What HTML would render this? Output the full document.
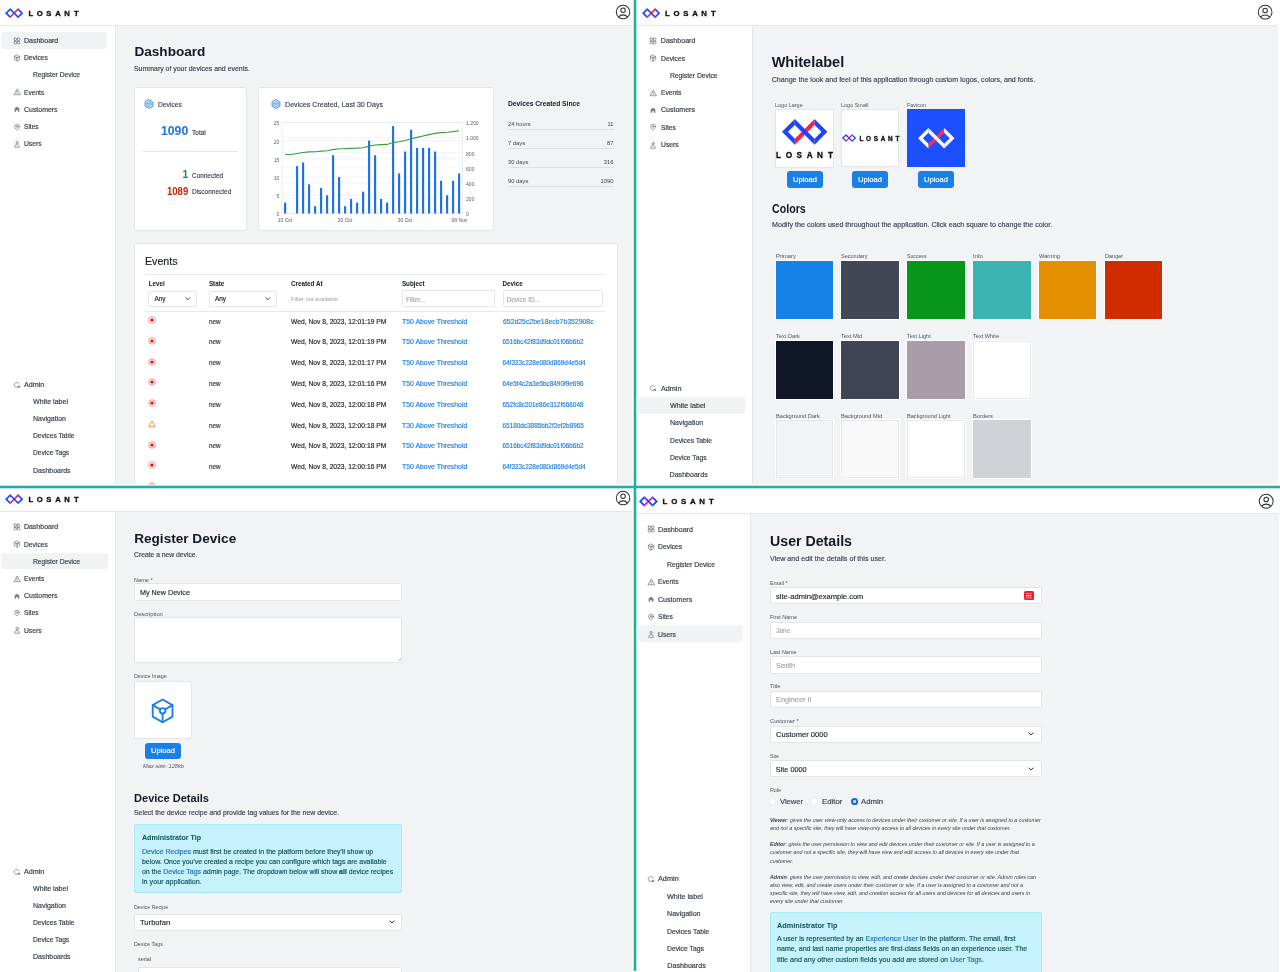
<!DOCTYPE html><html><head><meta charset="utf-8"><style>
html,body{margin:0;padding:0;width:1280px;height:972px;overflow:hidden;background:#fff;font-family:'Liberation Sans', sans-serif;}
.a{position:absolute;}
.t{white-space:nowrap;}
</style></head><body>
<div class="a" style="left:0.00px;top:0.00px;width:1280.00px;height:972.00px;background:#fff;"></div>
<div class="a" style="left:0;top:0;width:1280px;height:972px;clip-path:inset(0px 646px 487.8px 0px);will-change:transform">
<div class="a" style="left:0.00px;top:0.00px;width:632.00px;height:484.00px;background:#fff;"></div>
<div class="a" style="left:115.00px;top:25.00px;width:517.00px;height:459.00px;background:#f2f3f5;"></div>
<div class="a" style="left:0.00px;top:25.00px;width:632.00px;height:1.00px;background:#e4e6ea;"></div>
<div class="a" style="left:115.00px;top:25.00px;width:1.00px;height:459.00px;background:#e4e6ea;"></div>
<svg class="a" style="left:5.00px;top:8.10px;overflow:visible" width="18.30" height="10.30" viewBox="0 0 177 100"><polygon fill="#ff1f45" points="50,100 127,23 127,0 50,77"/><polygon fill="#1f43ff" points="50,0 0,50 50,100 50,77 23,50 50,23"/><polygon fill="#1f43ff" points="127,0 177,50 127,100 127,77 154,50 127,23"/><polygon fill="#1f43ff" points="50,0 127,77 127,100 50,23"/></svg>
<div class="a t" id="t0" style="top:4.05px;line-height:20.00px;font-size:7.700px;color:#0b0d12;font-weight:700;font-style:normal;font-family:'Liberation Sans', sans-serif;white-space:nowrap;left:30.75px;transform:translateX(-50%);-webkit-text-stroke:0.3px #0b0d12;">L</div>
<div class="a t" id="t1" style="top:4.05px;line-height:20.00px;font-size:7.700px;color:#0b0d12;font-weight:700;font-style:normal;font-family:'Liberation Sans', sans-serif;white-space:nowrap;left:39.85px;transform:translateX(-50%);-webkit-text-stroke:0.3px #0b0d12;">O</div>
<div class="a t" id="t2" style="top:4.05px;line-height:20.00px;font-size:7.700px;color:#0b0d12;font-weight:700;font-style:normal;font-family:'Liberation Sans', sans-serif;white-space:nowrap;left:48.95px;transform:translateX(-50%);-webkit-text-stroke:0.3px #0b0d12;">S</div>
<div class="a t" id="t3" style="top:4.05px;line-height:20.00px;font-size:7.700px;color:#0b0d12;font-weight:700;font-style:normal;font-family:'Liberation Sans', sans-serif;white-space:nowrap;left:58.05px;transform:translateX(-50%);-webkit-text-stroke:0.3px #0b0d12;">A</div>
<div class="a t" id="t4" style="top:4.05px;line-height:20.00px;font-size:7.700px;color:#0b0d12;font-weight:700;font-style:normal;font-family:'Liberation Sans', sans-serif;white-space:nowrap;left:67.15px;transform:translateX(-50%);-webkit-text-stroke:0.3px #0b0d12;">N</div>
<div class="a t" id="t5" style="top:4.05px;line-height:20.00px;font-size:7.700px;color:#0b0d12;font-weight:700;font-style:normal;font-family:'Liberation Sans', sans-serif;white-space:nowrap;left:76.25px;transform:translateX(-50%);-webkit-text-stroke:0.3px #0b0d12;">T</div>
<svg class="a" style="left:613.65px;top:3.25px;" width="18.10" height="18.10" viewBox="0 0 24 24"><path fill="none" stroke="#2b303b" stroke-width="1.35" stroke-linecap="round" stroke-linejoin="round" d="M17.982 18.725A7.488 7.488 0 0012 15.75a7.488 7.488 0 00-5.982 2.975m11.963 0a9 9 0 10-11.963 0m11.963 0A8.966 8.966 0 0112 21a8.966 8.966 0 01-5.982-2.275M15 9.75a3 3 0 11-6 0 3 3 0 016 0z"/></svg>
<div class="a" style="left:1.00px;top:32.20px;width:106.30px;height:16.60px;background:#f1f2f4;border-radius:3.0px;"></div>
<svg class="a" style="left:12.70px;top:36.90px;" width="8.00" height="8.00" viewBox="0 0 24 24"><g fill="none" stroke="#7a808b" stroke-width="2.3" stroke-linecap="round" stroke-linejoin="round"><rect x="3.5" y="3.5" width="7" height="7" rx="0.8"/><rect x="13.5" y="3.5" width="7" height="7" rx="0.8"/><rect x="3.5" y="13.5" width="7" height="7" rx="0.8"/><rect x="13.5" y="13.5" width="7" height="7" rx="0.8"/></g></svg>
<div class="a t" id="t6" style="top:31.25px;line-height:20.00px;font-size:7.000px;color:#353c4a;font-weight:400;font-style:normal;font-family:'Liberation Sans', sans-serif;white-space:nowrap;left:24.00px;-webkit-text-stroke:0.18px #353c4a;">Dashboard</div>
<svg class="a" style="left:12.70px;top:54.02px;" width="8.00" height="8.00" viewBox="0 0 24 24"><g fill="none" stroke="#7a808b" stroke-width="2.3" stroke-linecap="round" stroke-linejoin="round"><path d="M12 3l7.8 4.5v9L12 21l-7.8-4.5v-9z"/><circle cx="12" cy="11" r="2.6"/><path d="M12 13.6V21M4.2 7.5l5.6 2.6M19.8 7.5l-5.6 2.6"/></g></svg>
<div class="a t" id="t7" style="top:48.37px;line-height:20.00px;font-size:7.000px;color:#353c4a;font-weight:400;font-style:normal;font-family:'Liberation Sans', sans-serif;white-space:nowrap;left:24.00px;transform:scaleX(0.9556);transform-origin:left;-webkit-text-stroke:0.18px #353c4a;">Devices</div>
<div class="a t" id="t8" style="top:65.49px;line-height:20.00px;font-size:7.000px;color:#353c4a;font-weight:400;font-style:normal;font-family:'Liberation Sans', sans-serif;white-space:nowrap;left:32.90px;transform:scaleX(0.9530);transform-origin:left;-webkit-text-stroke:0.18px #353c4a;">Register Device</div>
<svg class="a" style="left:12.70px;top:88.26px;" width="8.00" height="8.00" viewBox="0 0 24 24"><g fill="none" stroke="#7a808b" stroke-width="2.3" stroke-linecap="round" stroke-linejoin="round"><path d="M12 4L3 20h18z"/><path d="M12 10v4.5M12 17.5v.1"/></g></svg>
<div class="a t" id="t9" style="top:82.61px;line-height:20.00px;font-size:7.000px;color:#353c4a;font-weight:400;font-style:normal;font-family:'Liberation Sans', sans-serif;white-space:nowrap;left:24.00px;transform:scaleX(0.9436);transform-origin:left;-webkit-text-stroke:0.18px #353c4a;">Events</div>
<svg class="a" style="left:12.70px;top:105.38px;" width="8.00" height="8.00" viewBox="0 0 24 24"><g fill="#7a808b"><path d="M5 9.5L12 5l7 4.5V20h-4v-4.5h-6V20H5z"/></g></svg>
<div class="a t" id="t10" style="top:99.73px;line-height:20.00px;font-size:7.000px;color:#353c4a;font-weight:400;font-style:normal;font-family:'Liberation Sans', sans-serif;white-space:nowrap;left:24.00px;transform:scaleX(0.9928);transform-origin:left;-webkit-text-stroke:0.18px #353c4a;">Customers</div>
<svg class="a" style="left:12.70px;top:122.50px;" width="8.00" height="8.00" viewBox="0 0 24 24"><g fill="none" stroke="#7a808b" stroke-width="2.3" stroke-linecap="round" stroke-linejoin="round"><path d="M19 10.5c0 6-7 10.5-7 10.5S5 16.5 5 10.5a7 7 0 1114 0z"/><circle cx="12" cy="10.5" r="2.5"/></g></svg>
<div class="a t" id="t11" style="top:116.85px;line-height:20.00px;font-size:7.000px;color:#353c4a;font-weight:400;font-style:normal;font-family:'Liberation Sans', sans-serif;white-space:nowrap;left:24.00px;transform:scaleX(0.9382);transform-origin:left;-webkit-text-stroke:0.18px #353c4a;">Sites</div>
<svg class="a" style="left:12.70px;top:139.62px;" width="8.00" height="8.00" viewBox="0 0 24 24"><g fill="none" stroke="#7a808b" stroke-width="2.3" stroke-linecap="round" stroke-linejoin="round"><circle cx="12" cy="7.5" r="3.5"/><path d="M5 20.5a7 7 0 0114 0z"/></g></svg>
<div class="a t" id="t12" style="top:133.97px;line-height:20.00px;font-size:7.000px;color:#353c4a;font-weight:400;font-style:normal;font-family:'Liberation Sans', sans-serif;white-space:nowrap;left:24.00px;transform:scaleX(0.9627);transform-origin:left;-webkit-text-stroke:0.18px #353c4a;">Users</div>
<svg class="a" style="left:12.70px;top:380.90px;" width="8.00" height="8.00" viewBox="0 0 24 24"><g fill="none" stroke="#7a808b" stroke-width="2.3" stroke-linecap="round" stroke-linejoin="round"><path d="M17.5 15.5A7.5 7.5 0 1118 9"/><circle cx="17.5" cy="17.5" r="2.2" fill="#7a808b"/></g></svg>
<div class="a t" id="t13" style="top:375.25px;line-height:20.00px;font-size:7.000px;color:#353c4a;font-weight:400;font-style:normal;font-family:'Liberation Sans', sans-serif;white-space:nowrap;left:24.00px;transform:scaleX(1.0230);transform-origin:left;-webkit-text-stroke:0.18px #353c4a;">Admin</div>
<div class="a t" id="t14" style="top:392.31px;line-height:20.00px;font-size:7.000px;color:#353c4a;font-weight:400;font-style:normal;font-family:'Liberation Sans', sans-serif;white-space:nowrap;left:32.90px;transform:scaleX(1.0133);transform-origin:left;-webkit-text-stroke:0.18px #353c4a;">White label</div>
<div class="a t" id="t15" style="top:409.37px;line-height:20.00px;font-size:7.000px;color:#353c4a;font-weight:400;font-style:normal;font-family:'Liberation Sans', sans-serif;white-space:nowrap;left:32.90px;transform:scaleX(0.9946);transform-origin:left;-webkit-text-stroke:0.18px #353c4a;">Navigation</div>
<div class="a t" id="t16" style="top:426.43px;line-height:20.00px;font-size:7.000px;color:#353c4a;font-weight:400;font-style:normal;font-family:'Liberation Sans', sans-serif;white-space:nowrap;left:32.90px;transform:scaleX(0.9551);transform-origin:left;-webkit-text-stroke:0.18px #353c4a;">Devices Table</div>
<div class="a t" id="t17" style="top:443.49px;line-height:20.00px;font-size:7.000px;color:#353c4a;font-weight:400;font-style:normal;font-family:'Liberation Sans', sans-serif;white-space:nowrap;left:32.90px;transform:scaleX(0.9522);transform-origin:left;-webkit-text-stroke:0.18px #353c4a;">Device Tags</div>
<div class="a t" id="t18" style="top:460.55px;line-height:20.00px;font-size:7.000px;color:#353c4a;font-weight:400;font-style:normal;font-family:'Liberation Sans', sans-serif;white-space:nowrap;left:32.90px;transform:scaleX(0.9960);transform-origin:left;-webkit-text-stroke:0.18px #353c4a;">Dashboards</div>
<div class="a t" id="t19" style="top:38.30px;line-height:27.20px;font-size:13.600px;color:#111827;font-weight:700;font-style:normal;font-family:'Liberation Sans', sans-serif;white-space:nowrap;left:134.40px;">Dashboard</div>
<div class="a t" id="t20" style="top:59.43px;line-height:20.00px;font-size:6.900px;color:#3a4150;font-weight:400;font-style:normal;font-family:'Liberation Sans', sans-serif;white-space:nowrap;-webkit-text-stroke:0.15px #3a4150;left:134.20px;transform:scaleX(1.0062);transform-origin:left;">Summary of your devices and events.</div>
<div class="a" style="left:134.40px;top:87.20px;width:112.50px;height:143.90px;background:#fff;box-shadow:inset 0 0 0 1px #e4e6ea;border-radius:3px;"></div>
<svg class="a" style="left:143.85px;top:99.20px;" width="10.00" height="10.00" viewBox="0 0 10 10"><g fill="none" stroke="#2a86ec" stroke-linejoin="round" stroke-linecap="round"><path stroke-width="0.95" d="M5 0.55L8.85 3v4.25L5 9.45 1.15 7.25V3z"/><circle stroke-width="0.7" cx="5" cy="5" r="2.5"/><path stroke-width="0.7" d="M3.9 4.3h2.2L5 6z"/></g></svg>
<div class="a t" id="t21" style="top:95.39px;line-height:20.00px;font-size:7.400px;color:#3a4150;font-weight:400;font-style:normal;font-family:'Liberation Sans', sans-serif;white-space:nowrap;-webkit-text-stroke:0.15px #3a4150;left:158.00px;transform:scaleX(0.9051);transform-origin:left;">Devices</div>
<div class="a t" id="t22" style="top:118.60px;line-height:25.20px;font-size:12.600px;color:#1a73e8;font-weight:700;font-style:normal;font-family:'Liberation Sans', sans-serif;white-space:nowrap;left:160.90px;transform:scaleX(0.9703);transform-origin:left;">1090</div>
<div class="a t" id="t23" style="top:123.24px;line-height:20.00px;font-size:7.000px;color:#3a4150;font-weight:400;font-style:normal;font-family:'Liberation Sans', sans-serif;white-space:nowrap;-webkit-text-stroke:0.15px #3a4150;left:192.30px;transform:scaleX(0.9326);transform-origin:left;">Total</div>
<div class="a" style="left:143.30px;top:151.20px;width:94.30px;height:1.00px;background:#e4e6ea;"></div>
<div class="a t" id="t24" style="top:164.60px;line-height:20.60px;font-size:10.300px;color:#0a9a1a;font-weight:700;font-style:normal;font-family:'Liberation Sans', sans-serif;white-space:nowrap;right:1091.90px;">1</div>
<div class="a t" id="t25" style="top:165.64px;line-height:20.00px;font-size:7.000px;color:#3a4150;font-weight:400;font-style:normal;font-family:'Liberation Sans', sans-serif;white-space:nowrap;-webkit-text-stroke:0.15px #3a4150;left:192.30px;transform:scaleX(0.9185);transform-origin:left;">Connected</div>
<div class="a t" id="t26" style="top:181.60px;line-height:20.00px;font-size:10.000px;color:#cc1f00;font-weight:700;font-style:normal;font-family:'Liberation Sans', sans-serif;white-space:nowrap;right:1091.90px;transform:scaleX(0.9573);transform-origin:right;">1089</div>
<div class="a t" id="t27" style="top:182.24px;line-height:20.00px;font-size:7.000px;color:#3a4150;font-weight:400;font-style:normal;font-family:'Liberation Sans', sans-serif;white-space:nowrap;-webkit-text-stroke:0.15px #3a4150;left:192.30px;transform:scaleX(0.9264);transform-origin:left;">Disconnected</div>
<div class="a" style="left:257.80px;top:87.30px;width:236.10px;height:143.90px;background:#fff;box-shadow:inset 0 0 0 1px #e4e6ea;border-radius:3px;"></div>
<svg class="a" style="left:271.00px;top:99.25px;" width="10.00" height="10.00" viewBox="0 0 10 10"><g fill="none" stroke="#2a86ec" stroke-linejoin="round" stroke-linecap="round"><path stroke-width="0.95" d="M5 0.55L8.85 3v4.25L5 9.45 1.15 7.25V3z"/><circle stroke-width="0.7" cx="5" cy="5" r="2.5"/><path stroke-width="0.7" d="M3.9 4.3h2.2L5 6z"/></g></svg>
<div class="a t" id="t28" style="top:95.19px;line-height:20.00px;font-size:7.400px;color:#3a4150;font-weight:400;font-style:normal;font-family:'Liberation Sans', sans-serif;white-space:nowrap;-webkit-text-stroke:0.15px #3a4150;left:285.10px;transform:scaleX(0.9620);transform-origin:left;">Devices Created, Last 30 Days</div>
<svg class="a" style="left:0.00px;top:0.00px;" width="632.00" height="484.00" viewBox="0 0 632 484"><line x1="282" x2="462.3" y1="195.28" y2="195.28" stroke="#eceff4" stroke-width="0.8"/><line x1="282" x2="462.3" y1="177.06" y2="177.06" stroke="#eceff4" stroke-width="0.8"/><line x1="282" x2="462.3" y1="158.84" y2="158.84" stroke="#eceff4" stroke-width="0.8"/><line x1="282" x2="462.3" y1="140.62" y2="140.62" stroke="#eceff4" stroke-width="0.8"/><line x1="282" x2="462.3" y1="198.32" y2="198.32" stroke="#eef1f5" stroke-width="0.8"/><line x1="282" x2="462.3" y1="183.13" y2="183.13" stroke="#eef1f5" stroke-width="0.8"/><line x1="282" x2="462.3" y1="167.95" y2="167.95" stroke="#eef1f5" stroke-width="0.8"/><line x1="282" x2="462.3" y1="152.77" y2="152.77" stroke="#eef1f5" stroke-width="0.8"/><line x1="282" x2="462.3" y1="137.58" y2="137.58" stroke="#eef1f5" stroke-width="0.8"/><rect x="282" y="122.4" width="180.3" height="91.1" fill="none" stroke="#e3e7ee" stroke-width="0.8"/><rect x="284.05" y="202.57" width="2.1" height="10.93" fill="#1a6fe8"/><rect x="296.05" y="166.13" width="2.1" height="47.37" fill="#1a6fe8"/><rect x="302.05" y="162.48" width="2.1" height="51.02" fill="#1a6fe8"/><rect x="308.05" y="184.35" width="2.1" height="29.15" fill="#1a6fe8"/><rect x="314.05" y="206.21" width="2.1" height="7.29" fill="#1a6fe8"/><rect x="320.05" y="187.99" width="2.1" height="25.51" fill="#1a6fe8"/><rect x="326.05" y="195.28" width="2.1" height="18.22" fill="#1a6fe8"/><rect x="332.05" y="155.20" width="2.1" height="58.30" fill="#1a6fe8"/><rect x="338.05" y="177.06" width="2.1" height="36.44" fill="#1a6fe8"/><rect x="344.05" y="206.21" width="2.1" height="7.29" fill="#1a6fe8"/><rect x="350.05" y="198.92" width="2.1" height="14.58" fill="#1a6fe8"/><rect x="356.05" y="202.57" width="2.1" height="10.93" fill="#1a6fe8"/><rect x="362.05" y="191.64" width="2.1" height="21.86" fill="#1a6fe8"/><rect x="368.05" y="140.62" width="2.1" height="72.88" fill="#1a6fe8"/><rect x="374.05" y="155.20" width="2.1" height="58.30" fill="#1a6fe8"/><rect x="380.05" y="198.92" width="2.1" height="14.58" fill="#1a6fe8"/><rect x="386.05" y="202.57" width="2.1" height="10.93" fill="#1a6fe8"/><rect x="392.05" y="126.04" width="2.1" height="87.46" fill="#1a6fe8"/><rect x="398.05" y="173.42" width="2.1" height="40.08" fill="#1a6fe8"/><rect x="404.05" y="151.55" width="2.1" height="61.95" fill="#1a6fe8"/><rect x="410.05" y="129.69" width="2.1" height="83.81" fill="#1a6fe8"/><rect x="416.05" y="147.91" width="2.1" height="65.59" fill="#1a6fe8"/><rect x="422.05" y="147.91" width="2.1" height="65.59" fill="#1a6fe8"/><rect x="428.05" y="147.91" width="2.1" height="65.59" fill="#1a6fe8"/><rect x="434.05" y="151.55" width="2.1" height="61.95" fill="#1a6fe8"/><rect x="440.05" y="180.70" width="2.1" height="32.80" fill="#1a6fe8"/><rect x="446.05" y="195.28" width="2.1" height="18.22" fill="#1a6fe8"/><rect x="452.05" y="180.70" width="2.1" height="32.80" fill="#1a6fe8"/><rect x="458.05" y="173.42" width="2.1" height="40.08" fill="#1a6fe8"/><polyline points="285.10,154.51 291.10,154.51 297.10,153.53 303.10,152.46 309.10,151.86 315.10,151.70 321.10,151.17 327.10,150.79 333.10,149.58 339.10,148.82 345.10,148.67 351.10,148.36 357.10,148.14 363.10,147.68 369.10,146.16 375.10,144.95 381.10,144.64 387.10,144.42 393.10,142.59 399.10,141.76 405.10,140.47 411.10,138.72 417.10,137.36 423.10,135.99 429.10,134.62 435.10,133.33 441.10,132.65 447.10,132.27 453.10,131.59 459.10,130.75" fill="none" stroke="#3c9a3c" stroke-width="1.1"/></svg>
<div class="a t" id="t29" style="top:204.40px;line-height:20.00px;font-size:5.000px;color:#555b66;font-weight:400;font-style:normal;font-family:'Liberation Sans', sans-serif;white-space:nowrap;right:1000.80px;">0</div>
<div class="a t" id="t30" style="top:186.18px;line-height:20.00px;font-size:5.000px;color:#555b66;font-weight:400;font-style:normal;font-family:'Liberation Sans', sans-serif;white-space:nowrap;right:1000.80px;">5</div>
<div class="a t" id="t31" style="top:167.96px;line-height:20.00px;font-size:5.000px;color:#555b66;font-weight:400;font-style:normal;font-family:'Liberation Sans', sans-serif;white-space:nowrap;right:1000.80px;">10</div>
<div class="a t" id="t32" style="top:149.74px;line-height:20.00px;font-size:5.000px;color:#555b66;font-weight:400;font-style:normal;font-family:'Liberation Sans', sans-serif;white-space:nowrap;right:1000.80px;">15</div>
<div class="a t" id="t33" style="top:131.52px;line-height:20.00px;font-size:5.000px;color:#555b66;font-weight:400;font-style:normal;font-family:'Liberation Sans', sans-serif;white-space:nowrap;right:1000.80px;">20</div>
<div class="a t" id="t34" style="top:113.30px;line-height:20.00px;font-size:5.000px;color:#555b66;font-weight:400;font-style:normal;font-family:'Liberation Sans', sans-serif;white-space:nowrap;right:1000.80px;">25</div>
<div class="a t" id="t35" style="top:204.40px;line-height:20.00px;font-size:5.000px;color:#555b66;font-weight:400;font-style:normal;font-family:'Liberation Sans', sans-serif;white-space:nowrap;left:466.10px;">0</div>
<div class="a t" id="t36" style="top:189.22px;line-height:20.00px;font-size:5.000px;color:#555b66;font-weight:400;font-style:normal;font-family:'Liberation Sans', sans-serif;white-space:nowrap;left:466.10px;">200</div>
<div class="a t" id="t37" style="top:174.03px;line-height:20.00px;font-size:5.000px;color:#555b66;font-weight:400;font-style:normal;font-family:'Liberation Sans', sans-serif;white-space:nowrap;left:466.10px;">400</div>
<div class="a t" id="t38" style="top:158.85px;line-height:20.00px;font-size:5.000px;color:#555b66;font-weight:400;font-style:normal;font-family:'Liberation Sans', sans-serif;white-space:nowrap;left:466.10px;">600</div>
<div class="a t" id="t39" style="top:143.67px;line-height:20.00px;font-size:5.000px;color:#555b66;font-weight:400;font-style:normal;font-family:'Liberation Sans', sans-serif;white-space:nowrap;left:466.10px;">800</div>
<div class="a t" id="t40" style="top:128.48px;line-height:20.00px;font-size:5.000px;color:#555b66;font-weight:400;font-style:normal;font-family:'Liberation Sans', sans-serif;white-space:nowrap;left:466.10px;">1,000</div>
<div class="a t" id="t41" style="top:113.30px;line-height:20.00px;font-size:5.000px;color:#555b66;font-weight:400;font-style:normal;font-family:'Liberation Sans', sans-serif;white-space:nowrap;left:466.10px;">1,200</div>
<div class="a t" id="t42" style="top:210.20px;line-height:20.00px;font-size:5.000px;color:#555b66;font-weight:400;font-style:normal;font-family:'Liberation Sans', sans-serif;white-space:nowrap;left:285.10px;transform:translateX(-50%);">10 Oct</div>
<div class="a t" id="t43" style="top:210.20px;line-height:20.00px;font-size:5.000px;color:#555b66;font-weight:400;font-style:normal;font-family:'Liberation Sans', sans-serif;white-space:nowrap;left:345.10px;transform:translateX(-50%);">20 Oct</div>
<div class="a t" id="t44" style="top:210.20px;line-height:20.00px;font-size:5.000px;color:#555b66;font-weight:400;font-style:normal;font-family:'Liberation Sans', sans-serif;white-space:nowrap;left:405.10px;transform:translateX(-50%);">30 Oct</div>
<div class="a t" id="t45" style="top:210.20px;line-height:20.00px;font-size:5.000px;color:#555b66;font-weight:400;font-style:normal;font-family:'Liberation Sans', sans-serif;white-space:nowrap;left:459.50px;transform:translateX(-50%);">08 Nov</div>
<div class="a t" id="t46" style="top:94.10px;line-height:20.00px;font-size:6.800px;color:#111827;font-weight:700;font-style:normal;font-family:'Liberation Sans', sans-serif;white-space:nowrap;left:508.00px;transform:scaleX(0.9874);transform-origin:left;">Devices Created Since</div>
<div class="a t" id="t47" style="top:113.90px;line-height:20.00px;font-size:5.800px;color:#3a4150;font-weight:400;font-style:normal;font-family:'Liberation Sans', sans-serif;white-space:nowrap;left:508.00px;">24 hours</div>
<div class="a t" id="t48" style="top:113.90px;line-height:20.00px;font-size:5.800px;color:#3a4150;font-weight:400;font-style:normal;font-family:'Liberation Sans', sans-serif;white-space:nowrap;right:666.50px;">11</div>
<div class="a" style="left:508.00px;top:128.80px;width:105.50px;height:1.00px;background:#dfe1e5;"></div>
<div class="a t" id="t49" style="top:132.80px;line-height:20.00px;font-size:5.800px;color:#3a4150;font-weight:400;font-style:normal;font-family:'Liberation Sans', sans-serif;white-space:nowrap;left:508.00px;">7 days</div>
<div class="a t" id="t50" style="top:132.80px;line-height:20.00px;font-size:5.800px;color:#3a4150;font-weight:400;font-style:normal;font-family:'Liberation Sans', sans-serif;white-space:nowrap;right:666.50px;">87</div>
<div class="a" style="left:508.00px;top:148.00px;width:105.50px;height:1.00px;background:#dfe1e5;"></div>
<div class="a t" id="t51" style="top:152.30px;line-height:20.00px;font-size:5.800px;color:#3a4150;font-weight:400;font-style:normal;font-family:'Liberation Sans', sans-serif;white-space:nowrap;left:508.00px;">30 days</div>
<div class="a t" id="t52" style="top:152.30px;line-height:20.00px;font-size:5.800px;color:#3a4150;font-weight:400;font-style:normal;font-family:'Liberation Sans', sans-serif;white-space:nowrap;right:666.50px;">316</div>
<div class="a" style="left:508.00px;top:167.20px;width:105.50px;height:1.00px;background:#dfe1e5;"></div>
<div class="a t" id="t53" style="top:171.20px;line-height:20.00px;font-size:5.800px;color:#3a4150;font-weight:400;font-style:normal;font-family:'Liberation Sans', sans-serif;white-space:nowrap;left:508.00px;">90 days</div>
<div class="a t" id="t54" style="top:171.20px;line-height:20.00px;font-size:5.800px;color:#3a4150;font-weight:400;font-style:normal;font-family:'Liberation Sans', sans-serif;white-space:nowrap;right:666.50px;">1090</div>
<div class="a" style="left:508.00px;top:186.20px;width:105.50px;height:1.00px;background:#dfe1e5;"></div>
<div class="a" style="left:134.40px;top:243.20px;width:483.40px;height:256.80px;background:#fff;box-shadow:inset 0 0 0 1px #e4e6ea;border-radius:3.5px;"></div>
<div class="a t" id="t55" style="top:250.60px;line-height:21.20px;font-size:10.600px;color:#111827;font-weight:400;font-style:normal;font-family:'Liberation Sans', sans-serif;white-space:nowrap;-webkit-text-stroke:0.15px #111827;left:145.30px;transform:scaleX(1.0034);transform-origin:left;">Events</div>
<div class="a" style="left:145.00px;top:274.40px;width:461.00px;height:1.00px;background:#e6e8eb;"></div>
<div class="a t" id="t56" style="top:273.70px;line-height:20.00px;font-size:6.300px;color:#111827;font-weight:700;font-style:normal;font-family:'Liberation Sans', sans-serif;white-space:nowrap;left:148.75px;">Level</div>
<div class="a t" id="t57" style="top:273.70px;line-height:20.00px;font-size:6.300px;color:#111827;font-weight:700;font-style:normal;font-family:'Liberation Sans', sans-serif;white-space:nowrap;left:208.90px;">State</div>
<div class="a t" id="t58" style="top:273.70px;line-height:20.00px;font-size:6.300px;color:#111827;font-weight:700;font-style:normal;font-family:'Liberation Sans', sans-serif;white-space:nowrap;left:291.00px;">Created At</div>
<div class="a t" id="t59" style="top:273.70px;line-height:20.00px;font-size:6.300px;color:#111827;font-weight:700;font-style:normal;font-family:'Liberation Sans', sans-serif;white-space:nowrap;left:401.90px;">Subject</div>
<div class="a t" id="t60" style="top:273.70px;line-height:20.00px;font-size:6.300px;color:#111827;font-weight:700;font-style:normal;font-family:'Liberation Sans', sans-serif;white-space:nowrap;left:502.50px;">Device</div>
<div class="a" style="left:148.40px;top:290.50px;width:48.80px;height:16.70px;background:#fff;box-shadow:inset 0 0 0 1px #e3e5e9;border-radius:2.5px;"></div>
<div class="a t" id="t61" style="top:289.08px;line-height:20.00px;font-size:6.500px;color:#222;font-weight:400;font-style:normal;font-family:'Liberation Sans', sans-serif;white-space:nowrap;-webkit-text-stroke:0.15px #222;left:154.40px;">Any</div>
<svg class="a" style="left:183.60px;top:294.90px;" width="7.60" height="7.60" viewBox="0 0 24 24"><path d="M6 9l6 6 6-6" fill="none" stroke="#333" stroke-width="2.8" stroke-linecap="round" stroke-linejoin="round"/></svg>
<div class="a" style="left:208.90px;top:290.50px;width:68.40px;height:16.70px;background:#fff;box-shadow:inset 0 0 0 1px #e3e5e9;border-radius:2.5px;"></div>
<div class="a t" id="t62" style="top:289.08px;line-height:20.00px;font-size:6.500px;color:#222;font-weight:400;font-style:normal;font-family:'Liberation Sans', sans-serif;white-space:nowrap;-webkit-text-stroke:0.15px #222;left:214.90px;">Any</div>
<svg class="a" style="left:263.70px;top:294.90px;" width="7.60" height="7.60" viewBox="0 0 24 24"><path d="M6 9l6 6 6-6" fill="none" stroke="#333" stroke-width="2.8" stroke-linecap="round" stroke-linejoin="round"/></svg>
<div class="a t" id="t63" style="top:289.42px;line-height:20.00px;font-size:5.200px;color:#9a9ea6;font-weight:400;font-style:normal;font-family:'Liberation Sans', sans-serif;white-space:nowrap;left:291.00px;transform:scaleX(1.1138);transform-origin:left;">Filter not available</div>
<div class="a" style="left:401.90px;top:290.40px;width:93.20px;height:16.80px;background:#fff;box-shadow:inset 0 0 0 1px #e3e5e9;border-radius:2.5px;"></div>
<div class="a t" id="t64" style="top:289.68px;line-height:20.00px;font-size:6.500px;color:#a3a7ae;font-weight:400;font-style:normal;font-family:'Liberation Sans', sans-serif;white-space:nowrap;-webkit-text-stroke:0.15px #a3a7ae;left:405.90px;">Filter...</div>
<div class="a" style="left:502.50px;top:290.40px;width:100.00px;height:16.80px;background:#fff;box-shadow:inset 0 0 0 1px #e3e5e9;border-radius:2.5px;"></div>
<div class="a t" id="t65" style="top:289.68px;line-height:20.00px;font-size:6.500px;color:#a3a7ae;font-weight:400;font-style:normal;font-family:'Liberation Sans', sans-serif;white-space:nowrap;-webkit-text-stroke:0.15px #a3a7ae;left:506.50px;">Device ID...</div>
<div class="a" style="left:145.30px;top:310.50px;width:460.70px;height:1.50px;background:#e6e8eb;"></div>
<svg class="a" style="left:148.30px;top:316.10px;" width="8.00" height="8.00" viewBox="0 0 8 8"><circle cx="4" cy="4" r="3.2" fill="none" stroke="#f08a8a" stroke-width="1"/><circle cx="4" cy="4" r="1.6" fill="#d10000"/></svg>
<div class="a t" id="t66" style="top:311.66px;line-height:20.00px;font-size:6.300px;color:#333;font-weight:400;font-style:normal;font-family:'Liberation Sans', sans-serif;white-space:nowrap;-webkit-text-stroke:0.15px #333;left:208.90px;">new</div>
<div class="a t" id="t67" style="top:311.67px;line-height:20.00px;font-size:6.400px;color:#222;font-weight:400;font-style:normal;font-family:'Liberation Sans', sans-serif;white-space:nowrap;-webkit-text-stroke:0.15px #222;left:290.90px;transform:scaleX(1.0492);transform-origin:left;">Wed, Nov 8, 2023, 12:01:19 PM</div>
<div class="a t" id="t68" style="top:311.67px;line-height:20.00px;font-size:6.400px;color:#1a7fe6;font-weight:400;font-style:normal;font-family:'Liberation Sans', sans-serif;white-space:nowrap;-webkit-text-stroke:0.15px #1a7fe6;left:401.90px;transform:scaleX(1.0768);transform-origin:left;">T50 Above Threshold</div>
<div class="a t" id="t69" style="top:311.67px;line-height:20.00px;font-size:6.400px;color:#1a7fe6;font-weight:400;font-style:normal;font-family:'Liberation Sans', sans-serif;white-space:nowrap;-webkit-text-stroke:0.15px #1a7fe6;left:502.50px;transform:scaleX(1.0756);transform-origin:left;">652d25c2be18ecb7b352908c</div>
<svg class="a" style="left:148.30px;top:336.87px;" width="8.00" height="8.00" viewBox="0 0 8 8"><circle cx="4" cy="4" r="3.2" fill="none" stroke="#f08a8a" stroke-width="1"/><circle cx="4" cy="4" r="1.6" fill="#d10000"/></svg>
<div class="a t" id="t70" style="top:332.43px;line-height:20.00px;font-size:6.300px;color:#333;font-weight:400;font-style:normal;font-family:'Liberation Sans', sans-serif;white-space:nowrap;-webkit-text-stroke:0.15px #333;left:208.90px;">new</div>
<div class="a t" id="t71" style="top:332.44px;line-height:20.00px;font-size:6.400px;color:#222;font-weight:400;font-style:normal;font-family:'Liberation Sans', sans-serif;white-space:nowrap;-webkit-text-stroke:0.15px #222;left:290.90px;transform:scaleX(1.0492);transform-origin:left;">Wed, Nov 8, 2023, 12:01:19 PM</div>
<div class="a t" id="t72" style="top:332.44px;line-height:20.00px;font-size:6.400px;color:#1a7fe6;font-weight:400;font-style:normal;font-family:'Liberation Sans', sans-serif;white-space:nowrap;-webkit-text-stroke:0.15px #1a7fe6;left:401.90px;transform:scaleX(1.0768);transform-origin:left;">T50 Above Threshold</div>
<div class="a t" id="t73" style="top:332.44px;line-height:20.00px;font-size:6.400px;color:#1a7fe6;font-weight:400;font-style:normal;font-family:'Liberation Sans', sans-serif;white-space:nowrap;-webkit-text-stroke:0.15px #1a7fe6;left:502.50px;">6516bc42f83d9dc01f06b6b2</div>
<svg class="a" style="left:148.30px;top:357.64px;" width="8.00" height="8.00" viewBox="0 0 8 8"><circle cx="4" cy="4" r="3.2" fill="none" stroke="#f08a8a" stroke-width="1"/><circle cx="4" cy="4" r="1.6" fill="#d10000"/></svg>
<div class="a t" id="t74" style="top:353.20px;line-height:20.00px;font-size:6.300px;color:#333;font-weight:400;font-style:normal;font-family:'Liberation Sans', sans-serif;white-space:nowrap;-webkit-text-stroke:0.15px #333;left:208.90px;">new</div>
<div class="a t" id="t75" style="top:353.21px;line-height:20.00px;font-size:6.400px;color:#222;font-weight:400;font-style:normal;font-family:'Liberation Sans', sans-serif;white-space:nowrap;-webkit-text-stroke:0.15px #222;left:290.90px;transform:scaleX(1.0492);transform-origin:left;">Wed, Nov 8, 2023, 12:01:17 PM</div>
<div class="a t" id="t76" style="top:353.21px;line-height:20.00px;font-size:6.400px;color:#1a7fe6;font-weight:400;font-style:normal;font-family:'Liberation Sans', sans-serif;white-space:nowrap;-webkit-text-stroke:0.15px #1a7fe6;left:401.90px;transform:scaleX(1.0768);transform-origin:left;">T50 Above Threshold</div>
<div class="a t" id="t77" style="top:353.21px;line-height:20.00px;font-size:6.400px;color:#1a7fe6;font-weight:400;font-style:normal;font-family:'Liberation Sans', sans-serif;white-space:nowrap;-webkit-text-stroke:0.15px #1a7fe6;left:502.50px;">64f323c228e080d869d4e5d4</div>
<svg class="a" style="left:148.30px;top:378.41px;" width="8.00" height="8.00" viewBox="0 0 8 8"><circle cx="4" cy="4" r="3.2" fill="none" stroke="#f08a8a" stroke-width="1"/><circle cx="4" cy="4" r="1.6" fill="#d10000"/></svg>
<div class="a t" id="t78" style="top:373.97px;line-height:20.00px;font-size:6.300px;color:#333;font-weight:400;font-style:normal;font-family:'Liberation Sans', sans-serif;white-space:nowrap;-webkit-text-stroke:0.15px #333;left:208.90px;">new</div>
<div class="a t" id="t79" style="top:373.98px;line-height:20.00px;font-size:6.400px;color:#222;font-weight:400;font-style:normal;font-family:'Liberation Sans', sans-serif;white-space:nowrap;-webkit-text-stroke:0.15px #222;left:290.90px;transform:scaleX(1.0492);transform-origin:left;">Wed, Nov 8, 2023, 12:01:16 PM</div>
<div class="a t" id="t80" style="top:373.98px;line-height:20.00px;font-size:6.400px;color:#1a7fe6;font-weight:400;font-style:normal;font-family:'Liberation Sans', sans-serif;white-space:nowrap;-webkit-text-stroke:0.15px #1a7fe6;left:401.90px;transform:scaleX(1.0768);transform-origin:left;">T50 Above Threshold</div>
<div class="a t" id="t81" style="top:373.98px;line-height:20.00px;font-size:6.400px;color:#1a7fe6;font-weight:400;font-style:normal;font-family:'Liberation Sans', sans-serif;white-space:nowrap;-webkit-text-stroke:0.15px #1a7fe6;left:502.50px;">64e5f4c2a3e5bc8490f9e696</div>
<svg class="a" style="left:148.30px;top:399.18px;" width="8.00" height="8.00" viewBox="0 0 8 8"><circle cx="4" cy="4" r="3.2" fill="none" stroke="#f08a8a" stroke-width="1"/><circle cx="4" cy="4" r="1.6" fill="#d10000"/></svg>
<div class="a t" id="t82" style="top:394.74px;line-height:20.00px;font-size:6.300px;color:#333;font-weight:400;font-style:normal;font-family:'Liberation Sans', sans-serif;white-space:nowrap;-webkit-text-stroke:0.15px #333;left:208.90px;">new</div>
<div class="a t" id="t83" style="top:394.75px;line-height:20.00px;font-size:6.400px;color:#222;font-weight:400;font-style:normal;font-family:'Liberation Sans', sans-serif;white-space:nowrap;-webkit-text-stroke:0.15px #222;left:290.90px;transform:scaleX(1.0492);transform-origin:left;">Wed, Nov 8, 2023, 12:00:18 PM</div>
<div class="a t" id="t84" style="top:394.75px;line-height:20.00px;font-size:6.400px;color:#1a7fe6;font-weight:400;font-style:normal;font-family:'Liberation Sans', sans-serif;white-space:nowrap;-webkit-text-stroke:0.15px #1a7fe6;left:401.90px;transform:scaleX(1.0768);transform-origin:left;">T50 Above Threshold</div>
<div class="a t" id="t85" style="top:394.75px;line-height:20.00px;font-size:6.400px;color:#1a7fe6;font-weight:400;font-style:normal;font-family:'Liberation Sans', sans-serif;white-space:nowrap;-webkit-text-stroke:0.15px #1a7fe6;left:502.50px;">652fc8c201e86e312f666048</div>
<svg class="a" style="left:148.30px;top:419.95px;" width="8.00" height="8.00" viewBox="0 0 8 8"><path d="M4 1L7.2 6.8H0.8z" fill="none" stroke="#e0902a" stroke-width="0.9" stroke-linejoin="round"/></svg>
<div class="a t" id="t86" style="top:415.51px;line-height:20.00px;font-size:6.300px;color:#333;font-weight:400;font-style:normal;font-family:'Liberation Sans', sans-serif;white-space:nowrap;-webkit-text-stroke:0.15px #333;left:208.90px;">new</div>
<div class="a t" id="t87" style="top:415.52px;line-height:20.00px;font-size:6.400px;color:#222;font-weight:400;font-style:normal;font-family:'Liberation Sans', sans-serif;white-space:nowrap;-webkit-text-stroke:0.15px #222;left:290.90px;transform:scaleX(1.0492);transform-origin:left;">Wed, Nov 8, 2023, 12:00:18 PM</div>
<div class="a t" id="t88" style="top:415.52px;line-height:20.00px;font-size:6.400px;color:#1a7fe6;font-weight:400;font-style:normal;font-family:'Liberation Sans', sans-serif;white-space:nowrap;-webkit-text-stroke:0.15px #1a7fe6;left:401.90px;transform:scaleX(1.0768);transform-origin:left;">T30 Above Threshold</div>
<div class="a t" id="t89" style="top:415.52px;line-height:20.00px;font-size:6.400px;color:#1a7fe6;font-weight:400;font-style:normal;font-family:'Liberation Sans', sans-serif;white-space:nowrap;-webkit-text-stroke:0.15px #1a7fe6;left:502.50px;">65180dc3885bb2f2ef2b8965</div>
<svg class="a" style="left:148.30px;top:440.72px;" width="8.00" height="8.00" viewBox="0 0 8 8"><circle cx="4" cy="4" r="3.2" fill="none" stroke="#f08a8a" stroke-width="1"/><circle cx="4" cy="4" r="1.6" fill="#d10000"/></svg>
<div class="a t" id="t90" style="top:436.28px;line-height:20.00px;font-size:6.300px;color:#333;font-weight:400;font-style:normal;font-family:'Liberation Sans', sans-serif;white-space:nowrap;-webkit-text-stroke:0.15px #333;left:208.90px;">new</div>
<div class="a t" id="t91" style="top:436.29px;line-height:20.00px;font-size:6.400px;color:#222;font-weight:400;font-style:normal;font-family:'Liberation Sans', sans-serif;white-space:nowrap;-webkit-text-stroke:0.15px #222;left:290.90px;transform:scaleX(1.0492);transform-origin:left;">Wed, Nov 8, 2023, 12:00:18 PM</div>
<div class="a t" id="t92" style="top:436.29px;line-height:20.00px;font-size:6.400px;color:#1a7fe6;font-weight:400;font-style:normal;font-family:'Liberation Sans', sans-serif;white-space:nowrap;-webkit-text-stroke:0.15px #1a7fe6;left:401.90px;transform:scaleX(1.0768);transform-origin:left;">T50 Above Threshold</div>
<div class="a t" id="t93" style="top:436.29px;line-height:20.00px;font-size:6.400px;color:#1a7fe6;font-weight:400;font-style:normal;font-family:'Liberation Sans', sans-serif;white-space:nowrap;-webkit-text-stroke:0.15px #1a7fe6;left:502.50px;">6516bc42f83d9dc01f06b6b2</div>
<svg class="a" style="left:148.30px;top:461.49px;" width="8.00" height="8.00" viewBox="0 0 8 8"><circle cx="4" cy="4" r="3.2" fill="none" stroke="#f08a8a" stroke-width="1"/><circle cx="4" cy="4" r="1.6" fill="#d10000"/></svg>
<div class="a t" id="t94" style="top:457.05px;line-height:20.00px;font-size:6.300px;color:#333;font-weight:400;font-style:normal;font-family:'Liberation Sans', sans-serif;white-space:nowrap;-webkit-text-stroke:0.15px #333;left:208.90px;">new</div>
<div class="a t" id="t95" style="top:457.06px;line-height:20.00px;font-size:6.400px;color:#222;font-weight:400;font-style:normal;font-family:'Liberation Sans', sans-serif;white-space:nowrap;-webkit-text-stroke:0.15px #222;left:290.90px;transform:scaleX(1.0492);transform-origin:left;">Wed, Nov 8, 2023, 12:00:16 PM</div>
<div class="a t" id="t96" style="top:457.06px;line-height:20.00px;font-size:6.400px;color:#1a7fe6;font-weight:400;font-style:normal;font-family:'Liberation Sans', sans-serif;white-space:nowrap;-webkit-text-stroke:0.15px #1a7fe6;left:401.90px;transform:scaleX(1.0768);transform-origin:left;">T50 Above Threshold</div>
<div class="a t" id="t97" style="top:457.06px;line-height:20.00px;font-size:6.400px;color:#1a7fe6;font-weight:400;font-style:normal;font-family:'Liberation Sans', sans-serif;white-space:nowrap;-webkit-text-stroke:0.15px #1a7fe6;left:502.50px;">64f323c228e080d869d4e5d4</div>
<svg class="a" style="left:148.30px;top:482.26px;" width="8.00" height="8.00" viewBox="0 0 8 8"><circle cx="4" cy="4" r="3.2" fill="none" stroke="#f08a8a" stroke-width="1"/><circle cx="4" cy="4" r="1.6" fill="#d10000"/></svg>
<div class="a t" id="t98" style="top:477.82px;line-height:20.00px;font-size:6.300px;color:#333;font-weight:400;font-style:normal;font-family:'Liberation Sans', sans-serif;white-space:nowrap;-webkit-text-stroke:0.15px #333;left:208.90px;">new</div>
<div class="a t" id="t99" style="top:477.83px;line-height:20.00px;font-size:6.400px;color:#222;font-weight:400;font-style:normal;font-family:'Liberation Sans', sans-serif;white-space:nowrap;-webkit-text-stroke:0.15px #222;left:290.90px;transform:scaleX(1.0492);transform-origin:left;">Wed, Nov 8, 2023, 12:00:16 PM</div>
<div class="a t" id="t100" style="top:477.83px;line-height:20.00px;font-size:6.400px;color:#1a7fe6;font-weight:400;font-style:normal;font-family:'Liberation Sans', sans-serif;white-space:nowrap;-webkit-text-stroke:0.15px #1a7fe6;left:401.90px;transform:scaleX(1.0768);transform-origin:left;">T50 Above Threshold</div>
<div class="a t" id="t101" style="top:477.83px;line-height:20.00px;font-size:6.400px;color:#1a7fe6;font-weight:400;font-style:normal;font-family:'Liberation Sans', sans-serif;white-space:nowrap;-webkit-text-stroke:0.15px #1a7fe6;left:502.50px;">64f323c228e080d869d4e5d4</div>
</div>
<div class="a" style="left:0;top:0;width:1280px;height:972px;clip-path:inset(0px 0px 488px 636px);will-change:transform">
<div class="a" style="left:636.00px;top:0.00px;width:642.40px;height:483.70px;background:#fff;"></div>
<div class="a" style="left:752.40px;top:25.00px;width:526.00px;height:458.70px;background:#f2f3f5;"></div>
<div class="a" style="left:636.00px;top:25.00px;width:642.40px;height:1.00px;background:#e4e6ea;"></div>
<div class="a" style="left:752.40px;top:25.00px;width:1.00px;height:458.70px;background:#e4e6ea;"></div>
<svg class="a" style="left:641.60px;top:7.90px;overflow:visible" width="18.30" height="10.30" viewBox="0 0 177 100"><polygon fill="#ff1f45" points="50,100 127,23 127,0 50,77"/><polygon fill="#1f43ff" points="50,0 0,50 50,100 50,77 23,50 50,23"/><polygon fill="#1f43ff" points="127,0 177,50 127,100 127,77 154,50 127,23"/><polygon fill="#1f43ff" points="50,0 127,77 127,100 50,23"/></svg>
<div class="a t" id="t102" style="top:3.86px;line-height:20.00px;font-size:7.781px;color:#0b0d12;font-weight:700;font-style:normal;font-family:'Liberation Sans', sans-serif;white-space:nowrap;left:667.40px;transform:translateX(-50%);-webkit-text-stroke:0.3px #0b0d12;">L</div>
<div class="a t" id="t103" style="top:3.86px;line-height:20.00px;font-size:7.781px;color:#0b0d12;font-weight:700;font-style:normal;font-family:'Liberation Sans', sans-serif;white-space:nowrap;left:676.60px;transform:translateX(-50%);-webkit-text-stroke:0.3px #0b0d12;">O</div>
<div class="a t" id="t104" style="top:3.86px;line-height:20.00px;font-size:7.781px;color:#0b0d12;font-weight:700;font-style:normal;font-family:'Liberation Sans', sans-serif;white-space:nowrap;left:685.79px;transform:translateX(-50%);-webkit-text-stroke:0.3px #0b0d12;">S</div>
<div class="a t" id="t105" style="top:3.86px;line-height:20.00px;font-size:7.781px;color:#0b0d12;font-weight:700;font-style:normal;font-family:'Liberation Sans', sans-serif;white-space:nowrap;left:694.99px;transform:translateX(-50%);-webkit-text-stroke:0.3px #0b0d12;">A</div>
<div class="a t" id="t106" style="top:3.86px;line-height:20.00px;font-size:7.781px;color:#0b0d12;font-weight:700;font-style:normal;font-family:'Liberation Sans', sans-serif;white-space:nowrap;left:704.18px;transform:translateX(-50%);-webkit-text-stroke:0.3px #0b0d12;">N</div>
<div class="a t" id="t107" style="top:3.86px;line-height:20.00px;font-size:7.781px;color:#0b0d12;font-weight:700;font-style:normal;font-family:'Liberation Sans', sans-serif;white-space:nowrap;left:713.38px;transform:translateX(-50%);-webkit-text-stroke:0.3px #0b0d12;">T</div>
<svg class="a" style="left:1256.45px;top:2.75px;" width="18.29" height="18.29" viewBox="0 0 24 24"><path fill="none" stroke="#2b303b" stroke-width="1.35" stroke-linecap="round" stroke-linejoin="round" d="M17.982 18.725A7.488 7.488 0 0012 15.75a7.488 7.488 0 00-5.982 2.975m11.963 0a9 9 0 10-11.963 0m11.963 0A8.966 8.966 0 0112 21a8.966 8.966 0 01-5.982-2.275M15 9.75a3 3 0 11-6 0 3 3 0 016 0z"/></svg>
<div class="a" style="left:637.80px;top:397.20px;width:107.00px;height:16.40px;background:#f1f2f4;border-radius:3.0315px;"></div>
<svg class="a" style="left:649.38px;top:36.86px;" width="8.08" height="8.08" viewBox="0 0 24 24"><g fill="none" stroke="#7a808b" stroke-width="2.3" stroke-linecap="round" stroke-linejoin="round"><rect x="3.5" y="3.5" width="7" height="7" rx="0.8"/><rect x="13.5" y="3.5" width="7" height="7" rx="0.8"/><rect x="3.5" y="13.5" width="7" height="7" rx="0.8"/><rect x="13.5" y="13.5" width="7" height="7" rx="0.8"/></g></svg>
<div class="a t" id="t108" style="top:31.25px;line-height:20.00px;font-size:7.073px;color:#353c4a;font-weight:400;font-style:normal;font-family:'Liberation Sans', sans-serif;white-space:nowrap;left:660.80px;-webkit-text-stroke:0.18px #353c4a;">Dashboard</div>
<svg class="a" style="left:649.38px;top:54.16px;" width="8.08" height="8.08" viewBox="0 0 24 24"><g fill="none" stroke="#7a808b" stroke-width="2.3" stroke-linecap="round" stroke-linejoin="round"><path d="M12 3l7.8 4.5v9L12 21l-7.8-4.5v-9z"/><circle cx="12" cy="11" r="2.6"/><path d="M12 13.6V21M4.2 7.5l5.6 2.6M19.8 7.5l-5.6 2.6"/></g></svg>
<div class="a t" id="t109" style="top:48.55px;line-height:20.00px;font-size:7.073px;color:#353c4a;font-weight:400;font-style:normal;font-family:'Liberation Sans', sans-serif;white-space:nowrap;left:660.80px;transform:scaleX(0.9572);transform-origin:left;-webkit-text-stroke:0.18px #353c4a;">Devices</div>
<div class="a t" id="t110" style="top:65.85px;line-height:20.00px;font-size:7.073px;color:#353c4a;font-weight:400;font-style:normal;font-family:'Liberation Sans', sans-serif;white-space:nowrap;left:669.60px;transform:scaleX(0.9546);transform-origin:left;-webkit-text-stroke:0.18px #353c4a;">Register Device</div>
<svg class="a" style="left:649.38px;top:88.76px;" width="8.08" height="8.08" viewBox="0 0 24 24"><g fill="none" stroke="#7a808b" stroke-width="2.3" stroke-linecap="round" stroke-linejoin="round"><path d="M12 4L3 20h18z"/><path d="M12 10v4.5M12 17.5v.1"/></g></svg>
<div class="a t" id="t111" style="top:83.15px;line-height:20.00px;font-size:7.073px;color:#353c4a;font-weight:400;font-style:normal;font-family:'Liberation Sans', sans-serif;white-space:nowrap;left:660.80px;transform:scaleX(0.9453);transform-origin:left;-webkit-text-stroke:0.18px #353c4a;">Events</div>
<svg class="a" style="left:649.38px;top:106.06px;" width="8.08" height="8.08" viewBox="0 0 24 24"><g fill="#7a808b"><path d="M5 9.5L12 5l7 4.5V20h-4v-4.5h-6V20H5z"/></g></svg>
<div class="a t" id="t112" style="top:100.45px;line-height:20.00px;font-size:7.073px;color:#353c4a;font-weight:400;font-style:normal;font-family:'Liberation Sans', sans-serif;white-space:nowrap;left:660.80px;transform:scaleX(0.9940);transform-origin:left;-webkit-text-stroke:0.18px #353c4a;">Customers</div>
<svg class="a" style="left:649.38px;top:123.36px;" width="8.08" height="8.08" viewBox="0 0 24 24"><g fill="none" stroke="#7a808b" stroke-width="2.3" stroke-linecap="round" stroke-linejoin="round"><path d="M19 10.5c0 6-7 10.5-7 10.5S5 16.5 5 10.5a7 7 0 1114 0z"/><circle cx="12" cy="10.5" r="2.5"/></g></svg>
<div class="a t" id="t113" style="top:117.75px;line-height:20.00px;font-size:7.073px;color:#353c4a;font-weight:400;font-style:normal;font-family:'Liberation Sans', sans-serif;white-space:nowrap;left:660.80px;transform:scaleX(0.9395);transform-origin:left;-webkit-text-stroke:0.18px #353c4a;">Sites</div>
<svg class="a" style="left:649.38px;top:140.66px;" width="8.08" height="8.08" viewBox="0 0 24 24"><g fill="none" stroke="#7a808b" stroke-width="2.3" stroke-linecap="round" stroke-linejoin="round"><circle cx="12" cy="7.5" r="3.5"/><path d="M5 20.5a7 7 0 0114 0z"/></g></svg>
<div class="a t" id="t114" style="top:135.05px;line-height:20.00px;font-size:7.073px;color:#353c4a;font-weight:400;font-style:normal;font-family:'Liberation Sans', sans-serif;white-space:nowrap;left:660.80px;transform:scaleX(0.9638);transform-origin:left;-webkit-text-stroke:0.18px #353c4a;">Users</div>
<svg class="a" style="left:649.38px;top:384.46px;" width="8.08" height="8.08" viewBox="0 0 24 24"><g fill="none" stroke="#7a808b" stroke-width="2.3" stroke-linecap="round" stroke-linejoin="round"><path d="M17.5 15.5A7.5 7.5 0 1118 9"/><circle cx="17.5" cy="17.5" r="2.2" fill="#7a808b"/></g></svg>
<div class="a t" id="t115" style="top:378.85px;line-height:20.00px;font-size:7.073px;color:#353c4a;font-weight:400;font-style:normal;font-family:'Liberation Sans', sans-serif;white-space:nowrap;left:660.80px;transform:scaleX(1.0241);transform-origin:left;-webkit-text-stroke:0.18px #353c4a;">Admin</div>
<div class="a t" id="t116" style="top:396.15px;line-height:20.00px;font-size:7.073px;color:#353c4a;font-weight:400;font-style:normal;font-family:'Liberation Sans', sans-serif;white-space:nowrap;left:669.60px;transform:scaleX(1.0152);transform-origin:left;-webkit-text-stroke:0.18px #353c4a;">White label</div>
<div class="a t" id="t117" style="top:413.45px;line-height:20.00px;font-size:7.073px;color:#353c4a;font-weight:400;font-style:normal;font-family:'Liberation Sans', sans-serif;white-space:nowrap;left:669.60px;transform:scaleX(0.9961);transform-origin:left;-webkit-text-stroke:0.18px #353c4a;">Navigation</div>
<div class="a t" id="t118" style="top:430.75px;line-height:20.00px;font-size:7.073px;color:#353c4a;font-weight:400;font-style:normal;font-family:'Liberation Sans', sans-serif;white-space:nowrap;left:669.60px;transform:scaleX(0.9565);transform-origin:left;-webkit-text-stroke:0.18px #353c4a;">Devices Table</div>
<div class="a t" id="t119" style="top:448.05px;line-height:20.00px;font-size:7.073px;color:#353c4a;font-weight:400;font-style:normal;font-family:'Liberation Sans', sans-serif;white-space:nowrap;left:669.60px;transform:scaleX(0.9540);transform-origin:left;-webkit-text-stroke:0.18px #353c4a;">Device Tags</div>
<div class="a t" id="t120" style="top:465.35px;line-height:20.00px;font-size:7.073px;color:#353c4a;font-weight:400;font-style:normal;font-family:'Liberation Sans', sans-serif;white-space:nowrap;left:669.60px;-webkit-text-stroke:0.18px #353c4a;">Dashboards</div>
<div class="a t" id="t121" style="top:48.35px;line-height:29.00px;font-size:14.500px;color:#111827;font-weight:700;font-style:normal;font-family:'Liberation Sans', sans-serif;white-space:nowrap;left:771.70px;">Whitelabel</div>
<div class="a t" id="t122" style="top:70.05px;line-height:20.00px;font-size:7.100px;color:#3a4150;font-weight:400;font-style:normal;font-family:'Liberation Sans', sans-serif;white-space:nowrap;-webkit-text-stroke:0.15px #3a4150;left:771.70px;">Change the look and feel of this application through custom logos, colors, and fonts.</div>
<div class="a t" id="t123" style="top:94.50px;line-height:20.00px;font-size:6.000px;color:#4b5260;font-weight:400;font-style:normal;font-family:'Liberation Sans', sans-serif;white-space:nowrap;left:775.20px;transform:scaleX(0.9119);transform-origin:left;">Logo Large</div>
<div class="a t" id="t124" style="top:94.50px;line-height:20.00px;font-size:6.000px;color:#4b5260;font-weight:400;font-style:normal;font-family:'Liberation Sans', sans-serif;white-space:nowrap;left:841.00px;transform:scaleX(0.9124);transform-origin:left;">Logo Small</div>
<div class="a t" id="t125" style="top:94.50px;line-height:20.00px;font-size:6.000px;color:#4b5260;font-weight:400;font-style:normal;font-family:'Liberation Sans', sans-serif;white-space:nowrap;left:907.00px;transform:scaleX(0.9041);transform-origin:left;">Favicon</div>
<div class="a" style="left:775.20px;top:108.80px;width:58.60px;height:58.80px;background:#fff;box-shadow:inset 0 0 0 1px #e3e5e9;"></div>
<svg class="a" style="left:781.70px;top:118.70px;overflow:visible" width="45.40" height="25.70" viewBox="0 0 177 100"><polygon fill="#ff1f45" points="50,100 127,23 127,0 50,77"/><polygon fill="#1f43ff" points="50,0 0,50 50,100 50,77 23,50 50,23"/><polygon fill="#1f43ff" points="127,0 177,50 127,100 127,77 154,50 127,23"/><polygon fill="#1f43ff" points="50,0 127,77 127,100 50,23"/></svg>
<div class="a t" id="t126" style="top:145.50px;line-height:20.00px;font-size:8.200px;color:#0b0d12;font-weight:700;font-style:normal;font-family:'Liberation Sans', sans-serif;white-space:nowrap;left:778.40px;transform:translateX(-50%);-webkit-text-stroke:0.3px #0b0d12;">L</div>
<div class="a t" id="t127" style="top:145.50px;line-height:20.00px;font-size:8.200px;color:#0b0d12;font-weight:700;font-style:normal;font-family:'Liberation Sans', sans-serif;white-space:nowrap;left:788.82px;transform:translateX(-50%);-webkit-text-stroke:0.3px #0b0d12;">O</div>
<div class="a t" id="t128" style="top:145.50px;line-height:20.00px;font-size:8.200px;color:#0b0d12;font-weight:700;font-style:normal;font-family:'Liberation Sans', sans-serif;white-space:nowrap;left:799.24px;transform:translateX(-50%);-webkit-text-stroke:0.3px #0b0d12;">S</div>
<div class="a t" id="t129" style="top:145.50px;line-height:20.00px;font-size:8.200px;color:#0b0d12;font-weight:700;font-style:normal;font-family:'Liberation Sans', sans-serif;white-space:nowrap;left:809.66px;transform:translateX(-50%);-webkit-text-stroke:0.3px #0b0d12;">A</div>
<div class="a t" id="t130" style="top:145.50px;line-height:20.00px;font-size:8.200px;color:#0b0d12;font-weight:700;font-style:normal;font-family:'Liberation Sans', sans-serif;white-space:nowrap;left:820.08px;transform:translateX(-50%);-webkit-text-stroke:0.3px #0b0d12;">N</div>
<div class="a t" id="t131" style="top:145.50px;line-height:20.00px;font-size:8.200px;color:#0b0d12;font-weight:700;font-style:normal;font-family:'Liberation Sans', sans-serif;white-space:nowrap;left:830.50px;transform:translateX(-50%);-webkit-text-stroke:0.3px #0b0d12;">T</div>
<div class="a" style="left:841.20px;top:108.90px;width:58.20px;height:58.40px;background:#fff;box-shadow:inset 0 0 0 1px #e3e5e9;"></div>
<svg class="a" style="left:841.90px;top:134.00px;overflow:visible" width="14.20" height="8.10" viewBox="0 0 177 100"><polygon fill="#ff1f45" points="50,100 127,23 127,0 50,77"/><polygon fill="#1f43ff" points="50,0 0,50 50,100 50,77 23,50 50,23"/><polygon fill="#1f43ff" points="127,0 177,50 127,100 127,77 154,50 127,23"/><polygon fill="#1f43ff" points="50,0 127,77 127,100 50,23"/></svg>
<div class="a t" id="t132" style="top:128.90px;line-height:20.00px;font-size:6.400px;color:#0b0d12;font-weight:700;font-style:normal;font-family:'Liberation Sans', sans-serif;white-space:nowrap;left:861.40px;transform:translateX(-50%);-webkit-text-stroke:0.3px #0b0d12;">L</div>
<div class="a t" id="t133" style="top:128.90px;line-height:20.00px;font-size:6.400px;color:#0b0d12;font-weight:700;font-style:normal;font-family:'Liberation Sans', sans-serif;white-space:nowrap;left:868.60px;transform:translateX(-50%);-webkit-text-stroke:0.3px #0b0d12;">O</div>
<div class="a t" id="t134" style="top:128.90px;line-height:20.00px;font-size:6.400px;color:#0b0d12;font-weight:700;font-style:normal;font-family:'Liberation Sans', sans-serif;white-space:nowrap;left:875.80px;transform:translateX(-50%);-webkit-text-stroke:0.3px #0b0d12;">S</div>
<div class="a t" id="t135" style="top:128.90px;line-height:20.00px;font-size:6.400px;color:#0b0d12;font-weight:700;font-style:normal;font-family:'Liberation Sans', sans-serif;white-space:nowrap;left:883.00px;transform:translateX(-50%);-webkit-text-stroke:0.3px #0b0d12;">A</div>
<div class="a t" id="t136" style="top:128.90px;line-height:20.00px;font-size:6.400px;color:#0b0d12;font-weight:700;font-style:normal;font-family:'Liberation Sans', sans-serif;white-space:nowrap;left:890.20px;transform:translateX(-50%);-webkit-text-stroke:0.3px #0b0d12;">N</div>
<div class="a t" id="t137" style="top:128.90px;line-height:20.00px;font-size:6.400px;color:#0b0d12;font-weight:700;font-style:normal;font-family:'Liberation Sans', sans-serif;white-space:nowrap;left:897.40px;transform:translateX(-50%);-webkit-text-stroke:0.3px #0b0d12;">T</div>
<div class="a" style="left:907.10px;top:109.10px;width:57.90px;height:57.90px;background:#1c50ff;"></div>
<svg class="a" style="left:917.70px;top:127.90px;overflow:visible" width="36.60" height="20.60" viewBox="0 0 177 100"><polygon fill="#ff2d4d" points="50,100 127,23 127,0 50,77"/><polygon fill="#ffffff" points="50,0 0,50 50,100 50,77 23,50 50,23"/><polygon fill="#ffffff" points="127,0 177,50 127,100 127,77 154,50 127,23"/><polygon fill="#ffffff" points="50,0 127,77 127,100 50,23"/></svg>
<div class="a" style="left:786.50px;top:171.20px;width:36.10px;height:16.80px;background:#1a80e5;border-radius:3.0px;"></div>
<div class="a t" id="t138" style="top:169.90px;line-height:20.00px;font-size:7.800px;color:#fff;font-weight:400;font-style:normal;font-family:'Liberation Sans', sans-serif;white-space:nowrap;left:804.55px;transform:translateX(-50%) scaleX(0.9669);transform-origin:center;-webkit-text-stroke:0.18px #fff;">Upload</div>
<div class="a" style="left:852.20px;top:171.20px;width:36.10px;height:16.80px;background:#1a80e5;border-radius:3.0px;"></div>
<div class="a t" id="t139" style="top:169.90px;line-height:20.00px;font-size:7.800px;color:#fff;font-weight:400;font-style:normal;font-family:'Liberation Sans', sans-serif;white-space:nowrap;left:870.25px;transform:translateX(-50%) scaleX(0.9669);transform-origin:center;-webkit-text-stroke:0.18px #fff;">Upload</div>
<div class="a" style="left:918.00px;top:171.20px;width:36.00px;height:16.80px;background:#1a80e5;border-radius:3.0px;"></div>
<div class="a t" id="t140" style="top:169.90px;line-height:20.00px;font-size:7.800px;color:#fff;font-weight:400;font-style:normal;font-family:'Liberation Sans', sans-serif;white-space:nowrap;left:936.00px;transform:translateX(-50%) scaleX(0.9669);transform-origin:center;-webkit-text-stroke:0.18px #fff;">Upload</div>
<div class="a t" id="t141" style="top:196.60px;line-height:25.00px;font-size:12.500px;color:#111827;font-weight:700;font-style:normal;font-family:'Liberation Sans', sans-serif;white-space:nowrap;left:771.60px;transform:scaleX(0.8537);transform-origin:left;">Colors</div>
<div class="a t" id="t142" style="top:215.25px;line-height:20.00px;font-size:7.100px;color:#3a4150;font-weight:400;font-style:normal;font-family:'Liberation Sans', sans-serif;white-space:nowrap;-webkit-text-stroke:0.15px #3a4150;left:771.60px;transform:scaleX(1.0054);transform-origin:left;">Modify the colors used throughout the application. Click each square to change the color.</div>
<div class="a t" id="t143" style="top:246.30px;line-height:20.00px;font-size:6.000px;color:#4b5260;font-weight:400;font-style:normal;font-family:'Liberation Sans', sans-serif;white-space:nowrap;left:775.60px;transform:scaleX(0.9627);transform-origin:left;">Primary</div>
<div class="a" style="left:774.60px;top:260.30px;width:59.60px;height:59.60px;background:#fff;"></div>
<div class="a" style="left:775.60px;top:261.30px;width:57.60px;height:57.60px;background:#1480e8;"></div>
<div class="a t" id="t144" style="top:246.30px;line-height:20.00px;font-size:6.000px;color:#4b5260;font-weight:400;font-style:normal;font-family:'Liberation Sans', sans-serif;white-space:nowrap;left:841.40px;transform:scaleX(0.9203);transform-origin:left;">Secondary</div>
<div class="a" style="left:840.40px;top:260.30px;width:59.60px;height:59.60px;background:#fff;"></div>
<div class="a" style="left:841.40px;top:261.30px;width:57.60px;height:57.60px;background:#414753;"></div>
<div class="a t" id="t145" style="top:246.30px;line-height:20.00px;font-size:6.000px;color:#4b5260;font-weight:400;font-style:normal;font-family:'Liberation Sans', sans-serif;white-space:nowrap;left:907.20px;transform:scaleX(0.8595);transform-origin:left;">Success</div>
<div class="a" style="left:906.20px;top:260.30px;width:59.60px;height:59.60px;background:#fff;"></div>
<div class="a" style="left:907.20px;top:261.30px;width:57.60px;height:57.60px;background:#07961a;"></div>
<div class="a t" id="t146" style="top:246.30px;line-height:20.00px;font-size:6.000px;color:#4b5260;font-weight:400;font-style:normal;font-family:'Liberation Sans', sans-serif;white-space:nowrap;left:973.00px;transform:scaleX(0.9785);transform-origin:left;">Info</div>
<div class="a" style="left:972.00px;top:260.30px;width:59.60px;height:59.60px;background:#fff;"></div>
<div class="a" style="left:973.00px;top:261.30px;width:57.60px;height:57.60px;background:#3bb3b1;"></div>
<div class="a t" id="t147" style="top:246.30px;line-height:20.00px;font-size:6.000px;color:#4b5260;font-weight:400;font-style:normal;font-family:'Liberation Sans', sans-serif;white-space:nowrap;left:1038.80px;transform:scaleX(0.9492);transform-origin:left;">Warning</div>
<div class="a" style="left:1037.80px;top:260.30px;width:59.60px;height:59.60px;background:#fff;"></div>
<div class="a" style="left:1038.80px;top:261.30px;width:57.60px;height:57.60px;background:#e38f00;"></div>
<div class="a t" id="t148" style="top:246.30px;line-height:20.00px;font-size:6.000px;color:#4b5260;font-weight:400;font-style:normal;font-family:'Liberation Sans', sans-serif;white-space:nowrap;left:1104.60px;transform:scaleX(0.9244);transform-origin:left;">Danger</div>
<div class="a" style="left:1103.60px;top:260.30px;width:59.60px;height:59.60px;background:#fff;"></div>
<div class="a" style="left:1104.60px;top:261.30px;width:57.60px;height:57.60px;background:#d12b00;"></div>
<div class="a t" id="t149" style="top:326.00px;line-height:20.00px;font-size:6.000px;color:#4b5260;font-weight:400;font-style:normal;font-family:'Liberation Sans', sans-serif;white-space:nowrap;left:775.60px;transform:scaleX(0.9430);transform-origin:left;">Text Dark</div>
<div class="a" style="left:774.60px;top:340.00px;width:59.60px;height:59.60px;background:#fff;"></div>
<div class="a" style="left:775.60px;top:341.00px;width:57.60px;height:57.60px;background:#101828;"></div>
<div class="a t" id="t150" style="top:326.00px;line-height:20.00px;font-size:6.000px;color:#4b5260;font-weight:400;font-style:normal;font-family:'Liberation Sans', sans-serif;white-space:nowrap;left:841.40px;transform:scaleX(0.9533);transform-origin:left;">Text Mid</div>
<div class="a" style="left:840.40px;top:340.00px;width:59.60px;height:59.60px;background:#fff;"></div>
<div class="a" style="left:841.40px;top:341.00px;width:57.60px;height:57.60px;background:#3f4554;"></div>
<div class="a t" id="t151" style="top:326.00px;line-height:20.00px;font-size:6.000px;color:#4b5260;font-weight:400;font-style:normal;font-family:'Liberation Sans', sans-serif;white-space:nowrap;left:907.20px;transform:scaleX(0.9226);transform-origin:left;">Text Light</div>
<div class="a" style="left:906.20px;top:340.00px;width:59.60px;height:59.60px;background:#fff;"></div>
<div class="a" style="left:907.20px;top:341.00px;width:57.60px;height:57.60px;background:#a99ea7;"></div>
<div class="a t" id="t152" style="top:326.00px;line-height:20.00px;font-size:6.000px;color:#4b5260;font-weight:400;font-style:normal;font-family:'Liberation Sans', sans-serif;white-space:nowrap;left:973.00px;transform:scaleX(0.9281);transform-origin:left;">Text White</div>
<div class="a" style="left:972.00px;top:340.00px;width:59.60px;height:59.60px;background:#fff;"></div>
<div class="a" style="left:973.00px;top:341.00px;width:57.60px;height:57.60px;background:#ffffff;box-shadow:inset 0 0 0 1px #e6e7ea;"></div>
<div class="a t" id="t153" style="top:405.50px;line-height:20.00px;font-size:6.000px;color:#4b5260;font-weight:400;font-style:normal;font-family:'Liberation Sans', sans-serif;white-space:nowrap;left:775.60px;transform:scaleX(0.9448);transform-origin:left;">Background Dark</div>
<div class="a" style="left:774.60px;top:419.20px;width:59.60px;height:59.60px;background:#fff;"></div>
<div class="a" style="left:775.60px;top:420.20px;width:57.60px;height:57.60px;background:#f2f3f5;box-shadow:inset 0 0 0 1px #e6e7ea;"></div>
<div class="a t" id="t154" style="top:405.50px;line-height:20.00px;font-size:6.000px;color:#4b5260;font-weight:400;font-style:normal;font-family:'Liberation Sans', sans-serif;white-space:nowrap;left:841.40px;transform:scaleX(0.9502);transform-origin:left;">Background Mid</div>
<div class="a" style="left:840.40px;top:419.20px;width:59.60px;height:59.60px;background:#fff;"></div>
<div class="a" style="left:841.40px;top:420.20px;width:57.60px;height:57.60px;background:#f9f9fa;box-shadow:inset 0 0 0 1px #e6e7ea;"></div>
<div class="a t" id="t155" style="top:405.50px;line-height:20.00px;font-size:6.000px;color:#4b5260;font-weight:400;font-style:normal;font-family:'Liberation Sans', sans-serif;white-space:nowrap;left:907.20px;transform:scaleX(0.9336);transform-origin:left;">Background Light</div>
<div class="a" style="left:906.20px;top:419.20px;width:59.60px;height:59.60px;background:#fff;"></div>
<div class="a" style="left:907.20px;top:420.20px;width:57.60px;height:57.60px;background:#ffffff;box-shadow:inset 0 0 0 1px #e6e7ea;"></div>
<div class="a t" id="t156" style="top:405.50px;line-height:20.00px;font-size:6.000px;color:#4b5260;font-weight:400;font-style:normal;font-family:'Liberation Sans', sans-serif;white-space:nowrap;left:973.00px;transform:scaleX(0.9469);transform-origin:left;">Borders</div>
<div class="a" style="left:972.00px;top:419.20px;width:59.60px;height:59.60px;background:#fff;"></div>
<div class="a" style="left:973.00px;top:420.20px;width:57.60px;height:57.60px;background:#d1d2d6;"></div>
</div>
<div class="a" style="left:0;top:0;width:1280px;height:972px;clip-path:inset(488px 646px 0px 0px);will-change:transform">
<div class="a" style="left:0.00px;top:488.00px;width:632.00px;height:484.00px;background:#fff;"></div>
<div class="a" style="left:115.00px;top:511.10px;width:517.00px;height:460.90px;background:#f2f3f5;"></div>
<div class="a" style="left:0.00px;top:511.10px;width:632.00px;height:1.00px;background:#e4e6ea;"></div>
<div class="a" style="left:115.00px;top:511.10px;width:1.00px;height:460.90px;background:#e4e6ea;"></div>
<svg class="a" style="left:5.00px;top:494.30px;overflow:visible" width="18.30" height="10.30" viewBox="0 0 177 100"><polygon fill="#ff1f45" points="50,100 127,23 127,0 50,77"/><polygon fill="#1f43ff" points="50,0 0,50 50,100 50,77 23,50 50,23"/><polygon fill="#1f43ff" points="127,0 177,50 127,100 127,77 154,50 127,23"/><polygon fill="#1f43ff" points="50,0 127,77 127,100 50,23"/></svg>
<div class="a t" id="t157" style="top:490.25px;line-height:20.00px;font-size:7.700px;color:#0b0d12;font-weight:700;font-style:normal;font-family:'Liberation Sans', sans-serif;white-space:nowrap;left:30.75px;transform:translateX(-50%);-webkit-text-stroke:0.3px #0b0d12;">L</div>
<div class="a t" id="t158" style="top:490.25px;line-height:20.00px;font-size:7.700px;color:#0b0d12;font-weight:700;font-style:normal;font-family:'Liberation Sans', sans-serif;white-space:nowrap;left:39.85px;transform:translateX(-50%);-webkit-text-stroke:0.3px #0b0d12;">O</div>
<div class="a t" id="t159" style="top:490.25px;line-height:20.00px;font-size:7.700px;color:#0b0d12;font-weight:700;font-style:normal;font-family:'Liberation Sans', sans-serif;white-space:nowrap;left:48.95px;transform:translateX(-50%);-webkit-text-stroke:0.3px #0b0d12;">S</div>
<div class="a t" id="t160" style="top:490.25px;line-height:20.00px;font-size:7.700px;color:#0b0d12;font-weight:700;font-style:normal;font-family:'Liberation Sans', sans-serif;white-space:nowrap;left:58.05px;transform:translateX(-50%);-webkit-text-stroke:0.3px #0b0d12;">A</div>
<div class="a t" id="t161" style="top:490.25px;line-height:20.00px;font-size:7.700px;color:#0b0d12;font-weight:700;font-style:normal;font-family:'Liberation Sans', sans-serif;white-space:nowrap;left:67.15px;transform:translateX(-50%);-webkit-text-stroke:0.3px #0b0d12;">N</div>
<div class="a t" id="t162" style="top:490.25px;line-height:20.00px;font-size:7.700px;color:#0b0d12;font-weight:700;font-style:normal;font-family:'Liberation Sans', sans-serif;white-space:nowrap;left:76.25px;transform:translateX(-50%);-webkit-text-stroke:0.3px #0b0d12;">T</div>
<svg class="a" style="left:614.05px;top:489.45px;" width="18.10" height="18.10" viewBox="0 0 24 24"><path fill="none" stroke="#2b303b" stroke-width="1.35" stroke-linecap="round" stroke-linejoin="round" d="M17.982 18.725A7.488 7.488 0 0012 15.75a7.488 7.488 0 00-5.982 2.975m11.963 0a9 9 0 10-11.963 0m11.963 0A8.966 8.966 0 0112 21a8.966 8.966 0 01-5.982-2.275M15 9.75a3 3 0 11-6 0 3 3 0 016 0z"/></svg>
<div class="a" style="left:0.50px;top:552.90px;width:107.20px;height:16.50px;background:#f1f2f4;border-radius:3.0px;"></div>
<svg class="a" style="left:12.60px;top:523.00px;" width="8.00" height="8.00" viewBox="0 0 24 24"><g fill="none" stroke="#7a808b" stroke-width="2.3" stroke-linecap="round" stroke-linejoin="round"><rect x="3.5" y="3.5" width="7" height="7" rx="0.8"/><rect x="13.5" y="3.5" width="7" height="7" rx="0.8"/><rect x="3.5" y="13.5" width="7" height="7" rx="0.8"/><rect x="13.5" y="13.5" width="7" height="7" rx="0.8"/></g></svg>
<div class="a t" id="t163" style="top:517.35px;line-height:20.00px;font-size:7.000px;color:#353c4a;font-weight:400;font-style:normal;font-family:'Liberation Sans', sans-serif;white-space:nowrap;left:23.90px;-webkit-text-stroke:0.18px #353c4a;">Dashboard</div>
<svg class="a" style="left:12.60px;top:540.20px;" width="8.00" height="8.00" viewBox="0 0 24 24"><g fill="none" stroke="#7a808b" stroke-width="2.3" stroke-linecap="round" stroke-linejoin="round"><path d="M12 3l7.8 4.5v9L12 21l-7.8-4.5v-9z"/><circle cx="12" cy="11" r="2.6"/><path d="M12 13.6V21M4.2 7.5l5.6 2.6M19.8 7.5l-5.6 2.6"/></g></svg>
<div class="a t" id="t164" style="top:534.55px;line-height:20.00px;font-size:7.000px;color:#353c4a;font-weight:400;font-style:normal;font-family:'Liberation Sans', sans-serif;white-space:nowrap;left:23.90px;transform:scaleX(0.9556);transform-origin:left;-webkit-text-stroke:0.18px #353c4a;">Devices</div>
<div class="a t" id="t165" style="top:551.75px;line-height:20.00px;font-size:7.000px;color:#353c4a;font-weight:400;font-style:normal;font-family:'Liberation Sans', sans-serif;white-space:nowrap;left:32.90px;transform:scaleX(0.9530);transform-origin:left;-webkit-text-stroke:0.18px #353c4a;">Register Device</div>
<svg class="a" style="left:12.60px;top:574.60px;" width="8.00" height="8.00" viewBox="0 0 24 24"><g fill="none" stroke="#7a808b" stroke-width="2.3" stroke-linecap="round" stroke-linejoin="round"><path d="M12 4L3 20h18z"/><path d="M12 10v4.5M12 17.5v.1"/></g></svg>
<div class="a t" id="t166" style="top:568.95px;line-height:20.00px;font-size:7.000px;color:#353c4a;font-weight:400;font-style:normal;font-family:'Liberation Sans', sans-serif;white-space:nowrap;left:23.90px;transform:scaleX(0.9436);transform-origin:left;-webkit-text-stroke:0.18px #353c4a;">Events</div>
<svg class="a" style="left:12.60px;top:591.80px;" width="8.00" height="8.00" viewBox="0 0 24 24"><g fill="#7a808b"><path d="M5 9.5L12 5l7 4.5V20h-4v-4.5h-6V20H5z"/></g></svg>
<div class="a t" id="t167" style="top:586.15px;line-height:20.00px;font-size:7.000px;color:#353c4a;font-weight:400;font-style:normal;font-family:'Liberation Sans', sans-serif;white-space:nowrap;left:23.90px;transform:scaleX(0.9928);transform-origin:left;-webkit-text-stroke:0.18px #353c4a;">Customers</div>
<svg class="a" style="left:12.60px;top:609.00px;" width="8.00" height="8.00" viewBox="0 0 24 24"><g fill="none" stroke="#7a808b" stroke-width="2.3" stroke-linecap="round" stroke-linejoin="round"><path d="M19 10.5c0 6-7 10.5-7 10.5S5 16.5 5 10.5a7 7 0 1114 0z"/><circle cx="12" cy="10.5" r="2.5"/></g></svg>
<div class="a t" id="t168" style="top:603.35px;line-height:20.00px;font-size:7.000px;color:#353c4a;font-weight:400;font-style:normal;font-family:'Liberation Sans', sans-serif;white-space:nowrap;left:23.90px;transform:scaleX(0.9382);transform-origin:left;-webkit-text-stroke:0.18px #353c4a;">Sites</div>
<svg class="a" style="left:12.60px;top:626.20px;" width="8.00" height="8.00" viewBox="0 0 24 24"><g fill="none" stroke="#7a808b" stroke-width="2.3" stroke-linecap="round" stroke-linejoin="round"><circle cx="12" cy="7.5" r="3.5"/><path d="M5 20.5a7 7 0 0114 0z"/></g></svg>
<div class="a t" id="t169" style="top:620.55px;line-height:20.00px;font-size:7.000px;color:#353c4a;font-weight:400;font-style:normal;font-family:'Liberation Sans', sans-serif;white-space:nowrap;left:23.90px;transform:scaleX(0.9627);transform-origin:left;-webkit-text-stroke:0.18px #353c4a;">Users</div>
<svg class="a" style="left:12.60px;top:867.50px;" width="8.00" height="8.00" viewBox="0 0 24 24"><g fill="none" stroke="#7a808b" stroke-width="2.3" stroke-linecap="round" stroke-linejoin="round"><path d="M17.5 15.5A7.5 7.5 0 1118 9"/><circle cx="17.5" cy="17.5" r="2.2" fill="#7a808b"/></g></svg>
<div class="a t" id="t170" style="top:861.85px;line-height:20.00px;font-size:7.000px;color:#353c4a;font-weight:400;font-style:normal;font-family:'Liberation Sans', sans-serif;white-space:nowrap;left:23.90px;transform:scaleX(1.0230);transform-origin:left;-webkit-text-stroke:0.18px #353c4a;">Admin</div>
<div class="a t" id="t171" style="top:878.97px;line-height:20.00px;font-size:7.000px;color:#353c4a;font-weight:400;font-style:normal;font-family:'Liberation Sans', sans-serif;white-space:nowrap;left:32.90px;transform:scaleX(1.0133);transform-origin:left;-webkit-text-stroke:0.18px #353c4a;">White label</div>
<div class="a t" id="t172" style="top:896.09px;line-height:20.00px;font-size:7.000px;color:#353c4a;font-weight:400;font-style:normal;font-family:'Liberation Sans', sans-serif;white-space:nowrap;left:32.90px;transform:scaleX(0.9946);transform-origin:left;-webkit-text-stroke:0.18px #353c4a;">Navigation</div>
<div class="a t" id="t173" style="top:913.21px;line-height:20.00px;font-size:7.000px;color:#353c4a;font-weight:400;font-style:normal;font-family:'Liberation Sans', sans-serif;white-space:nowrap;left:32.90px;transform:scaleX(0.9551);transform-origin:left;-webkit-text-stroke:0.18px #353c4a;">Devices Table</div>
<div class="a t" id="t174" style="top:930.33px;line-height:20.00px;font-size:7.000px;color:#353c4a;font-weight:400;font-style:normal;font-family:'Liberation Sans', sans-serif;white-space:nowrap;left:32.90px;transform:scaleX(0.9522);transform-origin:left;-webkit-text-stroke:0.18px #353c4a;">Device Tags</div>
<div class="a t" id="t175" style="top:947.45px;line-height:20.00px;font-size:7.000px;color:#353c4a;font-weight:400;font-style:normal;font-family:'Liberation Sans', sans-serif;white-space:nowrap;left:32.90px;transform:scaleX(0.9960);transform-origin:left;-webkit-text-stroke:0.18px #353c4a;">Dashboards</div>
<div class="a t" id="t176" style="top:524.50px;line-height:27.20px;font-size:13.600px;color:#111827;font-weight:700;font-style:normal;font-family:'Liberation Sans', sans-serif;white-space:nowrap;left:134.20px;">Register Device</div>
<div class="a t" id="t177" style="top:545.42px;line-height:20.00px;font-size:6.800px;color:#3a4150;font-weight:400;font-style:normal;font-family:'Liberation Sans', sans-serif;white-space:nowrap;-webkit-text-stroke:0.15px #3a4150;left:134.20px;transform:scaleX(0.9944);transform-origin:left;">Create a new device.</div>
<div class="a t" id="t178" style="top:570.02px;line-height:20.00px;font-size:6.000px;color:#4a505c;font-weight:400;font-style:normal;font-family:'Liberation Sans', sans-serif;white-space:nowrap;left:134.20px;transform:scaleX(0.9343);transform-origin:left;">Name *</div>
<div class="a" style="left:134.20px;top:583.30px;width:268.00px;height:17.60px;background:#fff;box-shadow:inset 0 0 0 1px #e2e4e8;border-radius:2.5px;"></div>
<div class="a t" id="t179" style="top:583.04px;line-height:20.00px;font-size:7.000px;color:#1f2430;font-weight:400;font-style:normal;font-family:'Liberation Sans', sans-serif;white-space:nowrap;-webkit-text-stroke:0.15px #1f2430;left:140.10px;transform:scaleX(1.0262);transform-origin:left;">My New Device</div>
<div class="a t" id="t180" style="top:604.02px;line-height:20.00px;font-size:6.000px;color:#4a505c;font-weight:400;font-style:normal;font-family:'Liberation Sans', sans-serif;white-space:nowrap;left:134.20px;transform:scaleX(0.9595);transform-origin:left;">Description</div>
<div class="a" style="left:134.20px;top:617.20px;width:268.00px;height:45.40px;background:#fff;box-shadow:inset 0 0 0 1px #e2e4e8;border-radius:2.5px;"></div>
<svg class="a" style="left:396.80px;top:657.00px;" width="4.50" height="4.50" viewBox="0 0 5 5"><path d="M1 4.5L4.5 1M2.8 4.5L4.5 2.8" stroke="#999" stroke-width="0.6"/></svg>
<div class="a t" id="t181" style="top:665.92px;line-height:20.00px;font-size:6.000px;color:#4a505c;font-weight:400;font-style:normal;font-family:'Liberation Sans', sans-serif;white-space:nowrap;left:134.20px;transform:scaleX(0.8940);transform-origin:left;">Device Image</div>
<div class="a" style="left:134.20px;top:681.20px;width:58.10px;height:57.90px;background:#fff;box-shadow:inset 0 0 0 1px #e2e4e8;"></div>
<svg class="a" style="left:150.40px;top:697.70px;" width="25.20" height="25.70" viewBox="0 0 24 26"><g fill="none" stroke="#1a7fe6" stroke-width="1.9" stroke-linejoin="round" stroke-linecap="round"><path d="M12 1.5l10 5.7v11.6L12 24.5 2 18.8V7.2z"/><path d="M2.3 7.4l7.2 4.1M21.7 7.4l-7.2 4.1M12 15.7v8.5"/><circle cx="12" cy="13" r="2.8"/></g></svg>
<div class="a" style="left:145.00px;top:742.70px;width:36.10px;height:16.80px;background:#1a80e5;border-radius:3.0px;"></div>
<div class="a t" id="t182" style="top:741.40px;line-height:20.00px;font-size:7.800px;color:#fff;font-weight:400;font-style:normal;font-family:'Liberation Sans', sans-serif;white-space:nowrap;left:163.05px;transform:translateX(-50%) scaleX(0.9669);transform-origin:center;-webkit-text-stroke:0.18px #fff;">Upload</div>
<div class="a t" id="t183" style="top:755.72px;line-height:20.00px;font-size:6.000px;color:#4b5260;font-weight:400;font-style:italic;font-family:'Liberation Sans', sans-serif;white-space:nowrap;left:142.70px;transform:scaleX(0.9456);transform-origin:left;">Max size: 128kb</div>
<div class="a t" id="t184" style="top:786.60px;line-height:22.00px;font-size:11.000px;color:#111827;font-weight:700;font-style:normal;font-family:'Liberation Sans', sans-serif;white-space:nowrap;left:134.20px;transform:scaleX(1.0052);transform-origin:left;">Device Details</div>
<div class="a t" id="t185" style="top:803.13px;line-height:20.00px;font-size:6.900px;color:#3a4150;font-weight:400;font-style:normal;font-family:'Liberation Sans', sans-serif;white-space:nowrap;-webkit-text-stroke:0.15px #3a4150;left:134.20px;transform:scaleX(1.0045);transform-origin:left;">Select the device recipe and provide tag values for the new device.</div>
<div class="a" style="left:134.20px;top:824.40px;width:267.90px;height:69.10px;background:#c6f3fb;box-shadow:inset 0 0 0 1px #a8e9f6;border-radius:3px;"></div>
<div class="a t" id="t186" style="top:827.80px;line-height:20.00px;font-size:7.000px;color:#0f4d5c;font-weight:700;font-style:normal;font-family:'Liberation Sans', sans-serif;white-space:nowrap;left:141.50px;transform:scaleX(1.0134);transform-origin:left;">Administrator Tip</div>
<div class="a t" id="t187" style="top:842.04px;line-height:20.00px;font-size:7.000px;color:#0f4d5c;font-weight:400;font-style:normal;font-family:'Liberation Sans', sans-serif;white-space:nowrap;-webkit-text-stroke:0.15px #0f4d5c;left:141.50px;transform:scaleX(1.0068);transform-origin:left;"><span style="color:#2a7be4">Device Recipes</span> must first be created in the platform before they'll show up</div>
<div class="a t" id="t188" style="top:852.04px;line-height:20.00px;font-size:7.000px;color:#0f4d5c;font-weight:400;font-style:normal;font-family:'Liberation Sans', sans-serif;white-space:nowrap;-webkit-text-stroke:0.15px #0f4d5c;left:141.50px;transform:scaleX(0.9928);transform-origin:left;">below. Once you've created a recipe you can configure which tags are available</div>
<div class="a t" id="t189" style="top:862.04px;line-height:20.00px;font-size:7.000px;color:#0f4d5c;font-weight:400;font-style:normal;font-family:'Liberation Sans', sans-serif;white-space:nowrap;-webkit-text-stroke:0.15px #0f4d5c;left:141.50px;transform:scaleX(0.9924);transform-origin:left;">on the <span style="color:#2a7be4">Device Tags</span> admin page. The dropdown below will show <b>all</b> device recipes</div>
<div class="a t" id="t190" style="top:872.04px;line-height:20.00px;font-size:7.000px;color:#0f4d5c;font-weight:400;font-style:normal;font-family:'Liberation Sans', sans-serif;white-space:nowrap;-webkit-text-stroke:0.15px #0f4d5c;left:141.50px;transform:scaleX(1.0244);transform-origin:left;">in your application.</div>
<div class="a t" id="t191" style="top:897.02px;line-height:20.00px;font-size:6.000px;color:#4a505c;font-weight:400;font-style:normal;font-family:'Liberation Sans', sans-serif;white-space:nowrap;left:134.20px;transform:scaleX(0.8840);transform-origin:left;">Device Recipe</div>
<div class="a" style="left:134.20px;top:913.70px;width:268.00px;height:17.00px;background:#fff;box-shadow:inset 0 0 0 1px #e2e4e8;border-radius:2.5px;"></div>
<div class="a t" id="t192" style="top:913.04px;line-height:20.00px;font-size:7.000px;color:#1f2430;font-weight:400;font-style:normal;font-family:'Liberation Sans', sans-serif;white-space:nowrap;-webkit-text-stroke:0.15px #1f2430;left:140.10px;transform:scaleX(1.0877);transform-origin:left;">Turbofan</div>
<svg class="a" style="left:388.21px;top:918.31px;" width="7.97" height="7.97" viewBox="0 0 24 24"><path d="M6 9l6 6 6-6" fill="none" stroke="#222" stroke-width="2.9" stroke-linecap="round" stroke-linejoin="round"/></svg>
<div class="a t" id="t193" style="top:934.02px;line-height:20.00px;font-size:6.000px;color:#4a505c;font-weight:400;font-style:normal;font-family:'Liberation Sans', sans-serif;white-space:nowrap;left:134.20px;transform:scaleX(0.8840);transform-origin:left;">Device Tags</div>
<div class="a t" id="t194" style="top:949.32px;line-height:20.00px;font-size:6.000px;color:#4a505c;font-weight:400;font-style:normal;font-family:'Liberation Sans', sans-serif;white-space:nowrap;left:137.70px;transform:scaleX(0.9133);transform-origin:left;">serial</div>
<div class="a" style="left:137.70px;top:966.50px;width:264.50px;height:18.50px;background:#fff;box-shadow:inset 0 0 0 1px #e2e4e8;border-radius:2.5px;"></div>
</div>
<div class="a" style="left:0;top:0;width:1280px;height:972px;clip-path:inset(488px 0px 0px 636px);will-change:transform">
<div class="a" style="left:636.00px;top:488.00px;width:643.00px;height:484.00px;background:#fff;"></div>
<div class="a" style="left:750.10px;top:513.40px;width:528.90px;height:458.60px;background:#f2f3f5;"></div>
<div class="a" style="left:636.00px;top:513.40px;width:643.00px;height:1.00px;background:#e4e6ea;"></div>
<div class="a" style="left:750.10px;top:513.40px;width:1.00px;height:458.60px;background:#e4e6ea;"></div>
<svg class="a" style="left:638.70px;top:496.00px;overflow:visible" width="18.90" height="10.90" viewBox="0 0 177 100"><polygon fill="#ff1f45" points="50,100 127,23 127,0 50,77"/><polygon fill="#1f43ff" points="50,0 0,50 50,100 50,77 23,50 50,23"/><polygon fill="#1f43ff" points="127,0 177,50 127,100 127,77 154,50 127,23"/><polygon fill="#1f43ff" points="50,0 127,77 127,100 50,23"/></svg>
<div class="a t" id="t195" style="top:492.27px;line-height:20.00px;font-size:7.854px;color:#0b0d12;font-weight:700;font-style:normal;font-family:'Liberation Sans', sans-serif;white-space:nowrap;left:665.00px;transform:translateX(-50%);-webkit-text-stroke:0.3px #0b0d12;">L</div>
<div class="a t" id="t196" style="top:492.27px;line-height:20.00px;font-size:7.854px;color:#0b0d12;font-weight:700;font-style:normal;font-family:'Liberation Sans', sans-serif;white-space:nowrap;left:674.28px;transform:translateX(-50%);-webkit-text-stroke:0.3px #0b0d12;">O</div>
<div class="a t" id="t197" style="top:492.27px;line-height:20.00px;font-size:7.854px;color:#0b0d12;font-weight:700;font-style:normal;font-family:'Liberation Sans', sans-serif;white-space:nowrap;left:683.56px;transform:translateX(-50%);-webkit-text-stroke:0.3px #0b0d12;">S</div>
<div class="a t" id="t198" style="top:492.27px;line-height:20.00px;font-size:7.854px;color:#0b0d12;font-weight:700;font-style:normal;font-family:'Liberation Sans', sans-serif;white-space:nowrap;left:692.85px;transform:translateX(-50%);-webkit-text-stroke:0.3px #0b0d12;">A</div>
<div class="a t" id="t199" style="top:492.27px;line-height:20.00px;font-size:7.854px;color:#0b0d12;font-weight:700;font-style:normal;font-family:'Liberation Sans', sans-serif;white-space:nowrap;left:702.13px;transform:translateX(-50%);-webkit-text-stroke:0.3px #0b0d12;">N</div>
<div class="a t" id="t200" style="top:492.27px;line-height:20.00px;font-size:7.854px;color:#0b0d12;font-weight:700;font-style:normal;font-family:'Liberation Sans', sans-serif;white-space:nowrap;left:711.41px;transform:translateX(-50%);-webkit-text-stroke:0.3px #0b0d12;">T</div>
<svg class="a" style="left:1257.07px;top:491.57px;" width="18.46" height="18.46" viewBox="0 0 24 24"><path fill="none" stroke="#2b303b" stroke-width="1.35" stroke-linecap="round" stroke-linejoin="round" d="M17.982 18.725A7.488 7.488 0 0012 15.75a7.488 7.488 0 00-5.982 2.975m11.963 0a9 9 0 10-11.963 0m11.963 0A8.966 8.966 0 0112 21a8.966 8.966 0 01-5.982-2.275M15 9.75a3 3 0 11-6 0 3 3 0 016 0z"/></svg>
<div class="a" style="left:638.00px;top:625.40px;width:104.70px;height:17.00px;background:#f1f2f4;border-radius:3.06px;"></div>
<svg class="a" style="left:646.67px;top:525.42px;" width="8.16" height="8.16" viewBox="0 0 24 24"><g fill="none" stroke="#7a808b" stroke-width="2.3" stroke-linecap="round" stroke-linejoin="round"><rect x="3.5" y="3.5" width="7" height="7" rx="0.8"/><rect x="13.5" y="3.5" width="7" height="7" rx="0.8"/><rect x="3.5" y="13.5" width="7" height="7" rx="0.8"/><rect x="13.5" y="13.5" width="7" height="7" rx="0.8"/></g></svg>
<div class="a t" id="t201" style="top:519.85px;line-height:20.00px;font-size:7.140px;color:#353c4a;font-weight:400;font-style:normal;font-family:'Liberation Sans', sans-serif;white-space:nowrap;left:658.20px;transform:scaleX(1.0036);transform-origin:left;-webkit-text-stroke:0.18px #353c4a;">Dashboard</div>
<svg class="a" style="left:646.67px;top:542.89px;" width="8.16" height="8.16" viewBox="0 0 24 24"><g fill="none" stroke="#7a808b" stroke-width="2.3" stroke-linecap="round" stroke-linejoin="round"><path d="M12 3l7.8 4.5v9L12 21l-7.8-4.5v-9z"/><circle cx="12" cy="11" r="2.6"/><path d="M12 13.6V21M4.2 7.5l5.6 2.6M19.8 7.5l-5.6 2.6"/></g></svg>
<div class="a t" id="t202" style="top:537.32px;line-height:20.00px;font-size:7.140px;color:#353c4a;font-weight:400;font-style:normal;font-family:'Liberation Sans', sans-serif;white-space:nowrap;left:658.20px;transform:scaleX(0.9579);transform-origin:left;-webkit-text-stroke:0.18px #353c4a;">Devices</div>
<div class="a t" id="t203" style="top:554.79px;line-height:20.00px;font-size:7.140px;color:#353c4a;font-weight:400;font-style:normal;font-family:'Liberation Sans', sans-serif;white-space:nowrap;left:667.30px;transform:scaleX(0.9552);transform-origin:left;-webkit-text-stroke:0.18px #353c4a;">Register Device</div>
<svg class="a" style="left:646.67px;top:577.83px;" width="8.16" height="8.16" viewBox="0 0 24 24"><g fill="none" stroke="#7a808b" stroke-width="2.3" stroke-linecap="round" stroke-linejoin="round"><path d="M12 4L3 20h18z"/><path d="M12 10v4.5M12 17.5v.1"/></g></svg>
<div class="a t" id="t204" style="top:572.26px;line-height:20.00px;font-size:7.140px;color:#353c4a;font-weight:400;font-style:normal;font-family:'Liberation Sans', sans-serif;white-space:nowrap;left:658.20px;transform:scaleX(0.9453);transform-origin:left;-webkit-text-stroke:0.18px #353c4a;">Events</div>
<svg class="a" style="left:646.67px;top:595.30px;" width="8.16" height="8.16" viewBox="0 0 24 24"><g fill="#7a808b"><path d="M5 9.5L12 5l7 4.5V20h-4v-4.5h-6V20H5z"/></g></svg>
<div class="a t" id="t205" style="top:589.73px;line-height:20.00px;font-size:7.140px;color:#353c4a;font-weight:400;font-style:normal;font-family:'Liberation Sans', sans-serif;white-space:nowrap;left:658.20px;transform:scaleX(0.9947);transform-origin:left;-webkit-text-stroke:0.18px #353c4a;">Customers</div>
<svg class="a" style="left:646.67px;top:612.77px;" width="8.16" height="8.16" viewBox="0 0 24 24"><g fill="none" stroke="#7a808b" stroke-width="2.3" stroke-linecap="round" stroke-linejoin="round"><path d="M19 10.5c0 6-7 10.5-7 10.5S5 16.5 5 10.5a7 7 0 1114 0z"/><circle cx="12" cy="10.5" r="2.5"/></g></svg>
<div class="a t" id="t206" style="top:607.20px;line-height:20.00px;font-size:7.140px;color:#353c4a;font-weight:400;font-style:normal;font-family:'Liberation Sans', sans-serif;white-space:nowrap;left:658.20px;transform:scaleX(0.9399);transform-origin:left;-webkit-text-stroke:0.18px #353c4a;">Sites</div>
<svg class="a" style="left:646.67px;top:630.24px;" width="8.16" height="8.16" viewBox="0 0 24 24"><g fill="none" stroke="#7a808b" stroke-width="2.3" stroke-linecap="round" stroke-linejoin="round"><circle cx="12" cy="7.5" r="3.5"/><path d="M5 20.5a7 7 0 0114 0z"/></g></svg>
<div class="a t" id="t207" style="top:624.67px;line-height:20.00px;font-size:7.140px;color:#353c4a;font-weight:400;font-style:normal;font-family:'Liberation Sans', sans-serif;white-space:nowrap;left:658.20px;transform:scaleX(0.9647);transform-origin:left;-webkit-text-stroke:0.18px #353c4a;">Users</div>
<svg class="a" style="left:646.67px;top:874.92px;" width="8.16" height="8.16" viewBox="0 0 24 24"><g fill="none" stroke="#7a808b" stroke-width="2.3" stroke-linecap="round" stroke-linejoin="round"><path d="M17.5 15.5A7.5 7.5 0 1118 9"/><circle cx="17.5" cy="17.5" r="2.2" fill="#7a808b"/></g></svg>
<div class="a t" id="t208" style="top:869.35px;line-height:20.00px;font-size:7.140px;color:#353c4a;font-weight:400;font-style:normal;font-family:'Liberation Sans', sans-serif;white-space:nowrap;left:658.20px;transform:scaleX(1.0249);transform-origin:left;-webkit-text-stroke:0.18px #353c4a;">Admin</div>
<div class="a t" id="t209" style="top:886.75px;line-height:20.00px;font-size:7.140px;color:#353c4a;font-weight:400;font-style:normal;font-family:'Liberation Sans', sans-serif;white-space:nowrap;left:667.30px;transform:scaleX(1.0157);transform-origin:left;-webkit-text-stroke:0.18px #353c4a;">White label</div>
<div class="a t" id="t210" style="top:904.15px;line-height:20.00px;font-size:7.140px;color:#353c4a;font-weight:400;font-style:normal;font-family:'Liberation Sans', sans-serif;white-space:nowrap;left:667.30px;transform:scaleX(0.9966);transform-origin:left;-webkit-text-stroke:0.18px #353c4a;">Navigation</div>
<div class="a t" id="t211" style="top:921.55px;line-height:20.00px;font-size:7.140px;color:#353c4a;font-weight:400;font-style:normal;font-family:'Liberation Sans', sans-serif;white-space:nowrap;left:667.30px;transform:scaleX(0.9569);transform-origin:left;-webkit-text-stroke:0.18px #353c4a;">Devices Table</div>
<div class="a t" id="t212" style="top:938.95px;line-height:20.00px;font-size:7.140px;color:#353c4a;font-weight:400;font-style:normal;font-family:'Liberation Sans', sans-serif;white-space:nowrap;left:667.30px;transform:scaleX(0.9544);transform-origin:left;-webkit-text-stroke:0.18px #353c4a;">Device Tags</div>
<div class="a t" id="t213" style="top:956.35px;line-height:20.00px;font-size:7.140px;color:#353c4a;font-weight:400;font-style:normal;font-family:'Liberation Sans', sans-serif;white-space:nowrap;left:667.30px;-webkit-text-stroke:0.18px #353c4a;">Dashboards</div>
<div class="a t" id="t214" style="top:526.75px;line-height:28.00px;font-size:14.000px;color:#111827;font-weight:700;font-style:normal;font-family:'Liberation Sans', sans-serif;white-space:nowrap;left:769.90px;transform:scaleX(1.0131);transform-origin:left;">User Details</div>
<div class="a t" id="t215" style="top:548.55px;line-height:20.00px;font-size:7.100px;color:#3a4150;font-weight:400;font-style:normal;font-family:'Liberation Sans', sans-serif;white-space:nowrap;-webkit-text-stroke:0.15px #3a4150;left:769.90px;transform:scaleX(1.0084);transform-origin:left;">View and edit the details of this user.</div>
<div class="a t" id="t216" style="top:573.00px;line-height:20.00px;font-size:6.000px;color:#4a505c;font-weight:400;font-style:normal;font-family:'Liberation Sans', sans-serif;white-space:nowrap;left:769.90px;transform:scaleX(0.9256);transform-origin:left;">Email *</div>
<div class="a" style="left:769.90px;top:587.20px;width:271.90px;height:17.30px;background:#fff;box-shadow:inset 0 0 0 1px #e2e4e8;border-radius:2.5px;"></div>
<div class="a t" id="t217" style="top:586.63px;line-height:20.00px;font-size:7.300px;color:#1f2430;font-weight:400;font-style:normal;font-family:'Liberation Sans', sans-serif;white-space:nowrap;-webkit-text-stroke:0.15px #1f2430;left:775.80px;transform:scaleX(1.0347);transform-origin:left;">site-admin@example.com</div>
<div class="a t" id="t218" style="top:607.40px;line-height:20.00px;font-size:6.000px;color:#4a505c;font-weight:400;font-style:normal;font-family:'Liberation Sans', sans-serif;white-space:nowrap;left:769.90px;transform:scaleX(0.9201);transform-origin:left;">First Name</div>
<div class="a" style="left:769.90px;top:621.70px;width:271.90px;height:17.20px;background:#fff;box-shadow:inset 0 0 0 1px #e2e4e8;border-radius:2.5px;"></div>
<div class="a t" id="t219" style="top:621.08px;line-height:20.00px;font-size:7.300px;color:#a3a7ae;font-weight:400;font-style:normal;font-family:'Liberation Sans', sans-serif;white-space:nowrap;-webkit-text-stroke:0.15px #a3a7ae;left:775.80px;transform:scaleX(0.8908);transform-origin:left;">Jane</div>
<div class="a t" id="t220" style="top:642.10px;line-height:20.00px;font-size:6.000px;color:#4a505c;font-weight:400;font-style:normal;font-family:'Liberation Sans', sans-serif;white-space:nowrap;left:769.90px;transform:scaleX(0.9133);transform-origin:left;">Last Name</div>
<div class="a" style="left:769.90px;top:655.90px;width:271.90px;height:17.70px;background:#fff;box-shadow:inset 0 0 0 1px #e2e4e8;border-radius:2.5px;"></div>
<div class="a t" id="t221" style="top:655.53px;line-height:20.00px;font-size:7.300px;color:#a3a7ae;font-weight:400;font-style:normal;font-family:'Liberation Sans', sans-serif;white-space:nowrap;-webkit-text-stroke:0.15px #a3a7ae;left:775.80px;transform:scaleX(1.0291);transform-origin:left;">Smith</div>
<div class="a t" id="t222" style="top:676.20px;line-height:20.00px;font-size:6.000px;color:#4a505c;font-weight:400;font-style:normal;font-family:'Liberation Sans', sans-serif;white-space:nowrap;left:769.90px;transform:scaleX(0.9438);transform-origin:left;">Title</div>
<div class="a" style="left:769.90px;top:691.00px;width:271.90px;height:17.20px;background:#fff;box-shadow:inset 0 0 0 1px #e2e4e8;border-radius:2.5px;"></div>
<div class="a t" id="t223" style="top:690.38px;line-height:20.00px;font-size:7.300px;color:#a3a7ae;font-weight:400;font-style:normal;font-family:'Liberation Sans', sans-serif;white-space:nowrap;-webkit-text-stroke:0.15px #a3a7ae;left:775.80px;transform:scaleX(1.0086);transform-origin:left;">Engineer II</div>
<div class="a t" id="t224" style="top:711.20px;line-height:20.00px;font-size:6.000px;color:#4a505c;font-weight:400;font-style:normal;font-family:'Liberation Sans', sans-serif;white-space:nowrap;left:769.90px;transform:scaleX(0.9595);transform-origin:left;">Customer *</div>
<div class="a" style="left:769.90px;top:725.70px;width:271.90px;height:17.00px;background:#fff;box-shadow:inset 0 0 0 1px #e2e4e8;border-radius:2.5px;"></div>
<div class="a t" id="t225" style="top:724.98px;line-height:20.00px;font-size:7.300px;color:#1f2430;font-weight:400;font-style:normal;font-family:'Liberation Sans', sans-serif;white-space:nowrap;-webkit-text-stroke:0.15px #1f2430;left:775.80px;transform:scaleX(1.0343);transform-origin:left;">Customer 0000</div>
<svg class="a" style="left:1027.21px;top:730.21px;" width="7.97" height="7.97" viewBox="0 0 24 24"><path d="M6 9l6 6 6-6" fill="none" stroke="#222" stroke-width="2.9" stroke-linecap="round" stroke-linejoin="round"/></svg>
<div class="a t" id="t226" style="top:745.90px;line-height:20.00px;font-size:6.000px;color:#4a505c;font-weight:400;font-style:normal;font-family:'Liberation Sans', sans-serif;white-space:nowrap;left:769.90px;transform:scaleX(0.8604);transform-origin:left;">Site</div>
<div class="a" style="left:769.90px;top:760.10px;width:271.90px;height:17.30px;background:#fff;box-shadow:inset 0 0 0 1px #e2e4e8;border-radius:2.5px;"></div>
<div class="a t" id="t227" style="top:759.53px;line-height:20.00px;font-size:7.300px;color:#1f2430;font-weight:400;font-style:normal;font-family:'Liberation Sans', sans-serif;white-space:nowrap;-webkit-text-stroke:0.15px #1f2430;left:775.80px;">Site 0000</div>
<svg class="a" style="left:1027.21px;top:764.76px;" width="7.97" height="7.97" viewBox="0 0 24 24"><path d="M6 9l6 6 6-6" fill="none" stroke="#222" stroke-width="2.9" stroke-linecap="round" stroke-linejoin="round"/></svg>
<div class="a" style="left:1024.20px;top:591.20px;width:9.40px;height:9.30px;background:#e8202a;border-radius:1.5px;"></div>
<svg class="a" style="left:1024.20px;top:591.20px;" width="9.40" height="9.30" viewBox="0 0 9.4 9.3"><g fill="#fff"><circle cx="2.8" cy="4.8" r="0.8"/><circle cx="4.7" cy="4.8" r="0.8"/><circle cx="6.6" cy="4.8" r="0.8"/></g><path d="M1.5 2.6h6.4M1.5 7h6.4" stroke="#fff" stroke-width="0.5"/></svg>
<div class="a t" id="t228" style="top:780.20px;line-height:20.00px;font-size:6.000px;color:#4a505c;font-weight:400;font-style:normal;font-family:'Liberation Sans', sans-serif;white-space:nowrap;left:769.90px;transform:scaleX(0.8911);transform-origin:left;">Role</div>
<svg class="a" style="left:769.40px;top:798.00px;" width="7.20" height="7.20" viewBox="0 0 7.2 7.2"><circle cx="3.6" cy="3.6" r="3.2" fill="#fff" stroke="#e6e7ea" stroke-width="0.6"/></svg>
<div class="a t" id="t229" style="top:792.46px;line-height:20.00px;font-size:7.200px;color:#3a4150;font-weight:400;font-style:normal;font-family:'Liberation Sans', sans-serif;white-space:nowrap;-webkit-text-stroke:0.15px #3a4150;left:779.80px;transform:scaleX(1.0529);transform-origin:left;">Viewer</div>
<svg class="a" style="left:811.30px;top:798.00px;" width="7.20" height="7.20" viewBox="0 0 7.2 7.2"><circle cx="3.6" cy="3.6" r="3.2" fill="#fff" stroke="#e6e7ea" stroke-width="0.6"/></svg>
<div class="a t" id="t230" style="top:792.46px;line-height:20.00px;font-size:7.200px;color:#3a4150;font-weight:400;font-style:normal;font-family:'Liberation Sans', sans-serif;white-space:nowrap;-webkit-text-stroke:0.15px #3a4150;left:821.50px;transform:scaleX(1.0862);transform-origin:left;">Editor</div>
<svg class="a" style="left:850.70px;top:798.00px;" width="7.20" height="7.20" viewBox="0 0 7.2 7.2"><circle cx="3.6" cy="3.6" r="3.6" fill="#1167f2"/><circle cx="3.6" cy="3.6" r="1.5" fill="#fff"/></svg>
<div class="a t" id="t231" style="top:792.46px;line-height:20.00px;font-size:7.200px;color:#3a4150;font-weight:400;font-style:normal;font-family:'Liberation Sans', sans-serif;white-space:nowrap;-webkit-text-stroke:0.15px #3a4150;left:861.10px;transform:scaleX(1.0798);transform-origin:left;">Admin</div>
<div class="a t" id="t232" style="top:809.62px;line-height:20.00px;font-size:6.000px;color:#3a4150;font-weight:400;font-style:italic;font-family:'Liberation Sans', sans-serif;white-space:nowrap;left:769.90px;transform:scaleX(0.8878);transform-origin:left;"><b>Viewer</b>: gives the user view-only access to devices under their customer or site. If a user is assigned to a customer</div>
<div class="a t" id="t233" style="top:817.82px;line-height:20.00px;font-size:6.000px;color:#3a4150;font-weight:400;font-style:italic;font-family:'Liberation Sans', sans-serif;white-space:nowrap;left:769.90px;transform:scaleX(0.8896);transform-origin:left;">and not a specific site, they will have view-only access to all devices in every site under that customer.</div>
<div class="a t" id="t234" style="top:834.22px;line-height:20.00px;font-size:6.000px;color:#3a4150;font-weight:400;font-style:italic;font-family:'Liberation Sans', sans-serif;white-space:nowrap;left:769.90px;transform:scaleX(0.8911);transform-origin:left;"><b>Editor</b>: gives the user permission to view and edit devices under their customer or site. If a user is assigned to a</div>
<div class="a t" id="t235" style="top:842.42px;line-height:20.00px;font-size:6.000px;color:#3a4150;font-weight:400;font-style:italic;font-family:'Liberation Sans', sans-serif;white-space:nowrap;left:769.90px;transform:scaleX(0.8924);transform-origin:left;">customer and not a specific site, they will have view and edit access to all devices in every site under that</div>
<div class="a t" id="t236" style="top:850.62px;line-height:20.00px;font-size:6.000px;color:#3a4150;font-weight:400;font-style:italic;font-family:'Liberation Sans', sans-serif;white-space:nowrap;left:769.90px;transform:scaleX(0.8957);transform-origin:left;">customer.</div>
<div class="a t" id="t237" style="top:866.52px;line-height:20.00px;font-size:6.000px;color:#3a4150;font-weight:400;font-style:italic;font-family:'Liberation Sans', sans-serif;white-space:nowrap;left:769.90px;transform:scaleX(0.8938);transform-origin:left;"><b>Admin</b>: gives the user permission to view, edit, and create devices under their customer or site. Admin roles can</div>
<div class="a t" id="t238" style="top:874.82px;line-height:20.00px;font-size:6.000px;color:#3a4150;font-weight:400;font-style:italic;font-family:'Liberation Sans', sans-serif;white-space:nowrap;left:769.90px;transform:scaleX(0.8992);transform-origin:left;">also view, edit, and create users under their customer or site. If a user is assigned to a customer and not a</div>
<div class="a t" id="t239" style="top:883.02px;line-height:20.00px;font-size:6.000px;color:#3a4150;font-weight:400;font-style:italic;font-family:'Liberation Sans', sans-serif;white-space:nowrap;left:769.90px;transform:scaleX(0.8893);transform-origin:left;">specific site, they will have view, edit, and creation access for all users and devices for all devices and users in</div>
<div class="a t" id="t240" style="top:891.22px;line-height:20.00px;font-size:6.000px;color:#3a4150;font-weight:400;font-style:italic;font-family:'Liberation Sans', sans-serif;white-space:nowrap;left:769.90px;transform:scaleX(0.8983);transform-origin:left;">every site under that customer.</div>
<div class="a" style="left:769.90px;top:912.00px;width:271.90px;height:73.00px;background:#c6f3fb;box-shadow:inset 0 0 0 1px #a8e9f6;border-radius:3px;"></div>
<div class="a t" id="t241" style="top:915.90px;line-height:20.00px;font-size:7.200px;color:#0f4d5c;font-weight:700;font-style:normal;font-family:'Liberation Sans', sans-serif;white-space:nowrap;left:777.40px;transform:scaleX(1.0120);transform-origin:left;">Administrator Tip</div>
<div class="a t" id="t242" style="top:929.26px;line-height:20.00px;font-size:7.200px;color:#0f4d5c;font-weight:400;font-style:normal;font-family:'Liberation Sans', sans-serif;white-space:nowrap;-webkit-text-stroke:0.15px #0f4d5c;left:777.40px;transform:scaleX(0.9893);transform-origin:left;">A user is represented by an <span style="color:#2a7be4">Experience User</span> in the platform. The email, first</div>
<div class="a t" id="t243" style="top:939.36px;line-height:20.00px;font-size:7.200px;color:#0f4d5c;font-weight:400;font-style:normal;font-family:'Liberation Sans', sans-serif;white-space:nowrap;-webkit-text-stroke:0.15px #0f4d5c;left:777.40px;transform:scaleX(0.9871);transform-origin:left;">name, and last name properties are first-class fields on an experience user. The</div>
<div class="a t" id="t244" style="top:949.56px;line-height:20.00px;font-size:7.200px;color:#0f4d5c;font-weight:400;font-style:normal;font-family:'Liberation Sans', sans-serif;white-space:nowrap;-webkit-text-stroke:0.15px #0f4d5c;left:777.40px;transform:scaleX(0.9888);transform-origin:left;">title and any other custom fields you add are stored on <span style="color:#2a7be4">User Tags</span>.</div>
</div>
<div class="a" style="left:633px;top:0;width:1px;height:971px;background:rgba(32,174,169,0.30)"></div>
<div class="a" style="left:636px;top:0;width:1px;height:971px;background:rgba(32,174,169,0.30)"></div>
<div class="a" style="left:0;top:485px;width:1280px;height:1px;background:rgba(32,174,169,0.30)"></div>
<div class="a" style="left:0;top:488px;width:1280px;height:1px;background:rgba(32,174,169,0.30)"></div>
<div class="a" style="left:634px;top:0;width:2px;height:971px;background:#20aea9"></div>
<div class="a" style="left:0;top:486px;width:1280px;height:2px;background:#20aea9"></div>
</body></html>
